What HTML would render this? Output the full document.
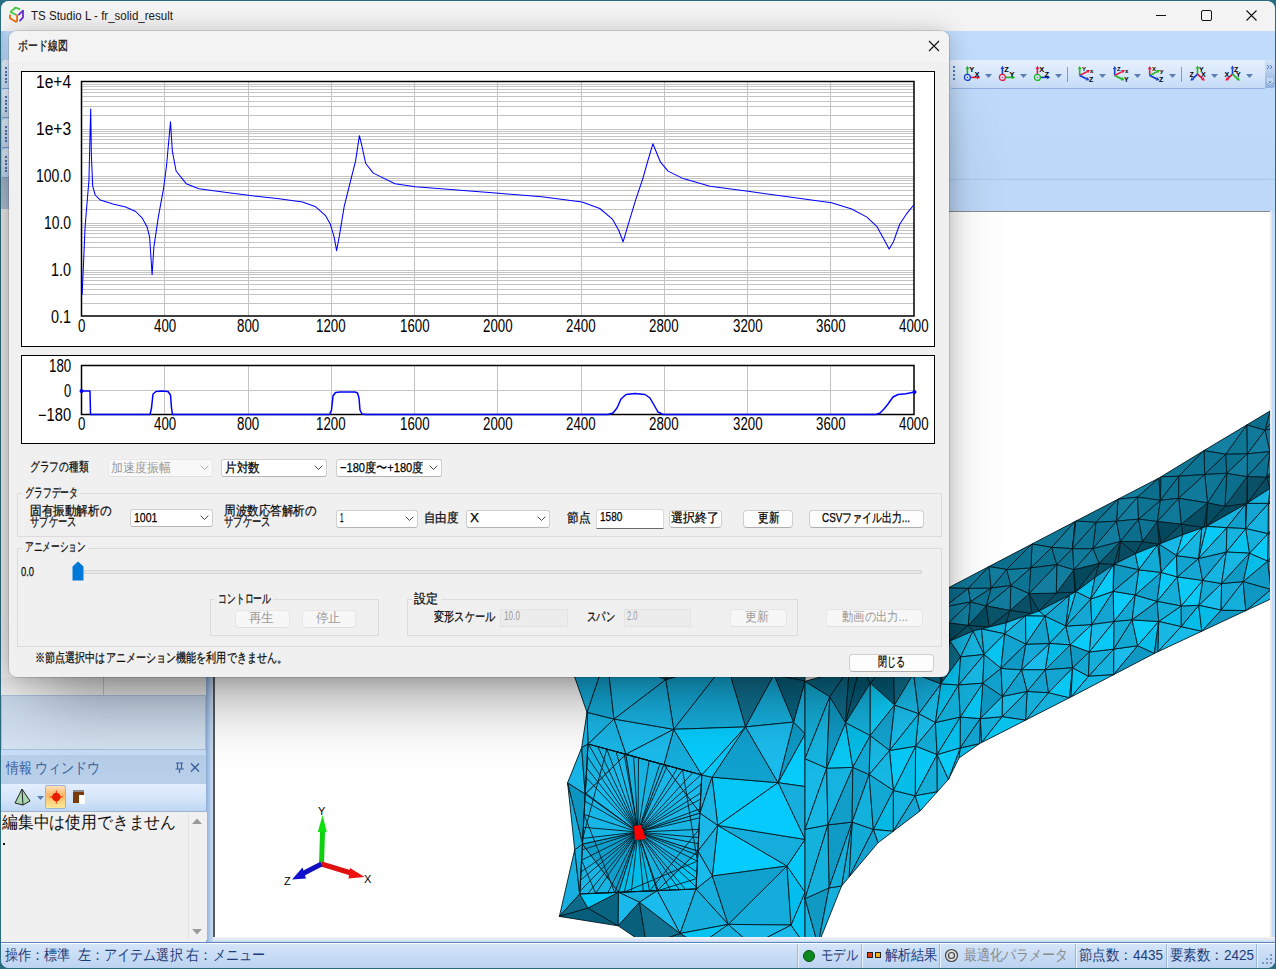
<!DOCTYPE html><html><head><meta charset="utf-8"><style>body{margin:0;width:1276px;height:969px;overflow:hidden;position:relative;font-family:'Liberation Sans', sans-serif}</style></head><body><div style="position:absolute;left:0px;top:0px;width:1276px;height:969px;background:#2b6b7f"></div><div style="position:absolute;left:1px;top:1px;width:1274px;height:967px;background:#c3dcf9;border-radius:8px;overflow:hidden"></div><div style="position:absolute;left:1px;top:1px;width:1274px;height:30px;background:#f3f3f3;border-radius:8px 8px 0 0"></div><svg style="position:absolute;left:0;top:0" width="30" height="30" viewBox="0 0 30 30">
<path d="M20.1 9.4 L15.6 7.5 L10.6 11.9 L16.4 15.1" fill="none" stroke="#3ec43e" stroke-width="1.7" stroke-linejoin="round"/>
<path d="M10 14.4 V18.3 L15.9 21.8 L17.1 20.8 V14.4" fill="none" stroke="#ec6a0c" stroke-width="1.8" stroke-linejoin="round"/>
<path d="M18.4 15.1 L23 10.6 V17.4 L19.6 21.1" fill="none" stroke="#6a2cd0" stroke-width="1.8" stroke-linejoin="round"/>
</svg><div style="position:absolute;left:31.00px;top:6.80px;line-height:17px;white-space:nowrap;font-family:'Liberation Sans', sans-serif;font-size:13px;color:#1a1a1a;transform:scaleX(0.8878);transform-origin:0 50%;">TS Studio L - fr_solid_result</div><div style="position:absolute;left:1156px;top:15px;width:10px;height:1px;background:#111"></div><div style="position:absolute;left:1201px;top:10px;width:9px;height:9px;border:1.2px solid #111;border-radius:2px"></div><svg style="position:absolute;left:1246px;top:10px" width="11" height="11"><path d="M0.5 0.5 L10.5 10.5 M10.5 0.5 L0.5 10.5" stroke="#111" stroke-width="1.1"/></svg><div style="position:absolute;left:1px;top:31px;width:1274px;height:150px;background:linear-gradient(#c0dbfb,#bcd8f9)"></div><div style="position:absolute;left:1px;top:179px;width:1274px;height:1px;background:#aac6e8"></div><div style="position:absolute;left:1px;top:180px;width:1274px;height:32px;background:#bdd8f8"></div><div style="position:absolute;left:950px;top:60px;width:316px;height:28px;background:linear-gradient(#e6f0fd,#d6e6fb 55%,#c5dbf6);border-radius:3px;border-bottom:1px solid #8fb1dd"></div><div style="position:absolute;left:1265px;top:60px;width:10px;height:28px;background:linear-gradient(#d4e4f8,#a9c4e8 60%,#8fb0de);border-radius:0 3px 3px 0"></div><svg style="position:absolute;left:1266px;top:64px" width="9" height="22"><path d="M1 1 L3 3 L1 5 M4 1 L6 3 L4 5" stroke="#5a80b8" fill="none" stroke-width="1"/><path d="M1 15 H7 M1 17 L7 17 L4 20Z" stroke="#f4f8fe" fill="#5a80b8" stroke-width="0.8"/></svg><div style="position:absolute;left:953px;top:66px;width:2px;height:2px;background:#4a78b8"></div><div style="position:absolute;left:953px;top:70px;width:2px;height:2px;background:#4a78b8"></div><div style="position:absolute;left:953px;top:74px;width:2px;height:2px;background:#4a78b8"></div><div style="position:absolute;left:953px;top:78px;width:2px;height:2px;background:#4a78b8"></div><svg style="position:absolute;left:963px;top:62px" width="20" height="22" viewBox="0 0 20 22"><path d="M4.40 12.20 L4.40 7.00" stroke="#22b422" stroke-width="1.6"/><path d="M4.40 3.80 L6.32 7.00 L2.48 7.00Z" fill="#22b422"/><path d="M7.60 15.40 L14.00 15.40" stroke="#e8163c" stroke-width="1.6"/><path d="M17.20 15.40 L14.00 17.32 L14.00 13.48Z" fill="#e8163c"/><circle cx="4.4" cy="15.4" r="3" fill="none" stroke="#1440d0" stroke-width="1.2"/><circle cx="4.4" cy="15.4" r="0.7" fill="#1440d0"/><text x="6.3" y="9.5" font-size="7.5" font-family="Liberation Sans" font-weight="bold" fill="#000">Y</text><text x="11.5" y="15" font-size="7.5" font-family="Liberation Sans" font-weight="bold" fill="#000">X</text></svg><svg style="position:absolute;left:985px;top:74px" width="7" height="4"><path d="M0 0 H7 L3.5 4Z" fill="#5a7eb0"/></svg><svg style="position:absolute;left:998px;top:62px" width="20" height="22" viewBox="0 0 20 22"><path d="M4.40 12.20 L4.40 7.00" stroke="#1440d0" stroke-width="1.6"/><path d="M4.40 3.80 L6.32 7.00 L2.48 7.00Z" fill="#1440d0"/><path d="M7.60 15.40 L14.00 15.40" stroke="#22b422" stroke-width="1.6"/><path d="M17.20 15.40 L14.00 17.32 L14.00 13.48Z" fill="#22b422"/><circle cx="4.4" cy="15.4" r="3" fill="none" stroke="#e8163c" stroke-width="1.2"/><circle cx="4.4" cy="15.4" r="0.7" fill="#e8163c"/><text x="6.3" y="9.5" font-size="7.5" font-family="Liberation Sans" font-weight="bold" fill="#000">Z</text><text x="11.5" y="15" font-size="7.5" font-family="Liberation Sans" font-weight="bold" fill="#000">Y</text></svg><svg style="position:absolute;left:1020px;top:74px" width="7" height="4"><path d="M0 0 H7 L3.5 4Z" fill="#5a7eb0"/></svg><svg style="position:absolute;left:1033px;top:62px" width="20" height="22" viewBox="0 0 20 22"><path d="M4.40 12.20 L4.40 7.00" stroke="#e8163c" stroke-width="1.6"/><path d="M4.40 3.80 L6.32 7.00 L2.48 7.00Z" fill="#e8163c"/><path d="M7.60 15.40 L14.00 15.40" stroke="#1440d0" stroke-width="1.6"/><path d="M17.20 15.40 L14.00 17.32 L14.00 13.48Z" fill="#1440d0"/><circle cx="4.4" cy="15.4" r="3" fill="none" stroke="#22b422" stroke-width="1.2"/><circle cx="4.4" cy="15.4" r="0.7" fill="#22b422"/><text x="6.3" y="9.5" font-size="7.5" font-family="Liberation Sans" font-weight="bold" fill="#000">X</text><text x="11.5" y="15" font-size="7.5" font-family="Liberation Sans" font-weight="bold" fill="#000">Z</text></svg><svg style="position:absolute;left:1055px;top:74px" width="7" height="4"><path d="M0 0 H7 L3.5 4Z" fill="#5a7eb0"/></svg><svg style="position:absolute;left:1076px;top:62px" width="20" height="22" viewBox="0 0 20 22"><path d="M3.70 13.50 L3.70 7.20" stroke="#22b422" stroke-width="1.6"/><path d="M3.70 4.00 L5.62 7.20 L1.78 7.20Z" fill="#22b422"/><path d="M3.70 13.50 L11.17 9.59" stroke="#e8163c" stroke-width="1.6"/><path d="M14.00 8.10 L12.06 11.29 L10.27 7.89Z" fill="#e8163c"/><path d="M3.70 13.50 L10.61 16.82" stroke="#1440d0" stroke-width="1.8"/><path d="M13.50 18.20 L9.78 18.55 L11.44 15.09Z" fill="#1440d0"/><text x="6" y="9" font-size="6" font-family="Liberation Sans" font-weight="bold" fill="#000">Y</text><text x="14" y="11" font-size="6" font-family="Liberation Sans" font-weight="bold" fill="#000">x</text><text x="13" y="20" font-size="7" font-family="Liberation Sans" font-weight="bold" fill="#000">Z</text></svg><svg style="position:absolute;left:1099px;top:74px" width="7" height="4"><path d="M0 0 H7 L3.5 4Z" fill="#5a7eb0"/></svg><svg style="position:absolute;left:1111px;top:62px" width="20" height="22" viewBox="0 0 20 22"><path d="M3.70 13.50 L3.70 7.20" stroke="#1440d0" stroke-width="1.6"/><path d="M3.70 4.00 L5.62 7.20 L1.78 7.20Z" fill="#1440d0"/><path d="M3.70 13.50 L11.17 9.59" stroke="#e8163c" stroke-width="1.6"/><path d="M14.00 8.10 L12.06 11.29 L10.27 7.89Z" fill="#e8163c"/><path d="M3.70 13.50 L10.61 16.82" stroke="#22b422" stroke-width="1.8"/><path d="M13.50 18.20 L9.78 18.55 L11.44 15.09Z" fill="#22b422"/><text x="6" y="9" font-size="6" font-family="Liberation Sans" font-weight="bold" fill="#000">Z</text><text x="14" y="11" font-size="6" font-family="Liberation Sans" font-weight="bold" fill="#000">x</text><text x="13" y="20" font-size="7" font-family="Liberation Sans" font-weight="bold" fill="#000">Y</text></svg><svg style="position:absolute;left:1134px;top:74px" width="7" height="4"><path d="M0 0 H7 L3.5 4Z" fill="#5a7eb0"/></svg><svg style="position:absolute;left:1146px;top:62px" width="20" height="22" viewBox="0 0 20 22"><path d="M3.70 13.50 L3.70 7.20" stroke="#e8163c" stroke-width="1.6"/><path d="M3.70 4.00 L5.62 7.20 L1.78 7.20Z" fill="#e8163c"/><path d="M3.70 13.50 L11.17 9.59" stroke="#22b422" stroke-width="1.6"/><path d="M14.00 8.10 L12.06 11.29 L10.27 7.89Z" fill="#22b422"/><path d="M3.70 13.50 L10.61 16.82" stroke="#1440d0" stroke-width="1.8"/><path d="M13.50 18.20 L9.78 18.55 L11.44 15.09Z" fill="#1440d0"/><text x="6" y="9" font-size="6" font-family="Liberation Sans" font-weight="bold" fill="#000">X</text><text x="14" y="11" font-size="6" font-family="Liberation Sans" font-weight="bold" fill="#000">y</text><text x="13" y="20" font-size="7" font-family="Liberation Sans" font-weight="bold" fill="#000">Z</text></svg><svg style="position:absolute;left:1169px;top:74px" width="7" height="4"><path d="M0 0 H7 L3.5 4Z" fill="#5a7eb0"/></svg><svg style="position:absolute;left:1189px;top:62px" width="20" height="22" viewBox="0 0 20 22"><path d="M8.50 12.10 L8.50 6.80" stroke="#22b422" stroke-width="1.6"/><path d="M8.50 3.60 L10.42 6.80 L6.58 6.80Z" fill="#22b422"/><path d="M8.50 12.10 L3.81 16.59" stroke="#1440d0" stroke-width="1.8"/><path d="M1.50 18.80 L2.48 15.20 L5.14 17.97Z" fill="#1440d0"/><path d="M8.50 12.10 L13.44 16.64" stroke="#e8163c" stroke-width="1.8"/><path d="M15.80 18.80 L12.14 18.05 L14.74 15.22Z" fill="#e8163c"/><text x="10" y="9.5" font-size="7" font-family="Liberation Sans" font-weight="bold" fill="#000">Y</text><text x="0.5" y="15" font-size="7" font-family="Liberation Sans" font-weight="bold" fill="#000">Z</text><text x="12" y="15" font-size="7" font-family="Liberation Sans" font-weight="bold" fill="#000">X</text></svg><svg style="position:absolute;left:1211px;top:74px" width="7" height="4"><path d="M0 0 H7 L3.5 4Z" fill="#5a7eb0"/></svg><svg style="position:absolute;left:1224px;top:62px" width="20" height="22" viewBox="0 0 20 22"><path d="M8.50 12.10 L8.50 6.80" stroke="#1440d0" stroke-width="1.6"/><path d="M8.50 3.60 L10.42 6.80 L6.58 6.80Z" fill="#1440d0"/><path d="M8.50 12.10 L3.81 16.59" stroke="#e8163c" stroke-width="1.8"/><path d="M1.50 18.80 L2.48 15.20 L5.14 17.97Z" fill="#e8163c"/><path d="M8.50 12.10 L13.44 16.64" stroke="#22b422" stroke-width="1.8"/><path d="M15.80 18.80 L12.14 18.05 L14.74 15.22Z" fill="#22b422"/><text x="10" y="9.5" font-size="7" font-family="Liberation Sans" font-weight="bold" fill="#000">Z</text><text x="0.5" y="15" font-size="7" font-family="Liberation Sans" font-weight="bold" fill="#000">X</text><text x="12" y="15" font-size="7" font-family="Liberation Sans" font-weight="bold" fill="#000">Y</text></svg><svg style="position:absolute;left:1246px;top:74px" width="7" height="4"><path d="M0 0 H7 L3.5 4Z" fill="#5a7eb0"/></svg><div style="position:absolute;left:1067px;top:67px;width:1px;height:15px;background:#7c9cc8"></div><div style="position:absolute;left:1181px;top:67px;width:1px;height:15px;background:#7c9cc8"></div><div style="position:absolute;left:213px;top:211px;width:1058px;height:728px;background:#fff;border-top:1px solid #8a8a8a;border-left:2px solid #5a5a5a;box-sizing:border-box"></div><div style="position:absolute;left:1270px;top:211px;width:2px;height:728px;background:#e8e8e8"></div><div style="position:absolute;left:213px;top:937px;width:1062px;height:5px;background:linear-gradient(#f4f4f4,#c9dcf4)"></div><svg style="position:absolute;left:0;top:0" width="1276" height="969"><defs><clipPath id="vp"><rect x="215" y="212" width="1055" height="725"/></clipPath></defs><g clip-path="url(#vp)"><polygon points="673.7,729.3 625.9,754.3 614.0,719.0" fill="#1bbced" stroke="#031820" stroke-width="0.9" stroke-linejoin="round"/><polygon points="582.5,844.0 618.5,892.3 579.7,894.0" fill="#18b4e4" stroke="#031820" stroke-width="0.9" stroke-linejoin="round"/><polygon points="618.5,892.3 582.5,844.0 638.0,832.0" fill="#0f9ecb" stroke="#031820" stroke-width="0.9" stroke-linejoin="round"/><polygon points="752.1,945.0 791.0,925.0 805.0,945.0" fill="#1ab9ea" stroke="#031820" stroke-width="0.9" stroke-linejoin="round"/><polygon points="699.3,945.0 728.2,924.4 752.1,945.0" fill="#16b0df" stroke="#031820" stroke-width="0.9" stroke-linejoin="round"/><polygon points="791.0,925.0 728.2,924.4 787.0,866.0" fill="#14acda" stroke="#031820" stroke-width="0.9" stroke-linejoin="round"/><polygon points="728.2,924.4 791.0,925.0 752.1,945.0" fill="#19b8e9" stroke="#031820" stroke-width="0.9" stroke-linejoin="round"/><polygon points="712.3,876.0 717.7,825.4 787.0,866.0" fill="#06cbfd" stroke="#031820" stroke-width="0.9" stroke-linejoin="round"/><polygon points="712.3,876.0 728.2,924.4 696.0,889.0" fill="#15aedd" stroke="#031820" stroke-width="0.9" stroke-linejoin="round"/><polygon points="728.2,924.4 712.3,876.0 787.0,866.0" fill="#10a1ce" stroke="#031820" stroke-width="0.9" stroke-linejoin="round"/><polygon points="585.2,794.0 625.9,754.3 638.0,832.0" fill="#1ab9ea" stroke="#031820" stroke-width="0.9" stroke-linejoin="round"/><polygon points="585.2,794.0 582.5,844.0 567.6,782.8" fill="#0b95c0" stroke="#031820" stroke-width="0.9" stroke-linejoin="round"/><polygon points="582.5,844.0 585.2,794.0 638.0,832.0" fill="#18b6e6" stroke="#031820" stroke-width="0.9" stroke-linejoin="round"/><polygon points="625.9,754.3 663.9,764.7 638.0,832.0" fill="#17b3e3" stroke="#031820" stroke-width="0.9" stroke-linejoin="round"/><polygon points="663.9,764.7 673.7,729.3 701.8,775.0" fill="#15aedd" stroke="#031820" stroke-width="0.9" stroke-linejoin="round"/><polygon points="663.9,764.7 625.9,754.3 673.7,729.3" fill="#1bbbec" stroke="#031820" stroke-width="0.9" stroke-linejoin="round"/><polygon points="574.7,849.8 579.7,894.0 559.4,916.4" fill="#16afdf" stroke="#031820" stroke-width="0.9" stroke-linejoin="round"/><polygon points="574.7,849.8 582.5,844.0 579.7,894.0" fill="#15afde" stroke="#031820" stroke-width="0.9" stroke-linejoin="round"/><polygon points="582.5,844.0 574.7,849.8 567.6,782.8" fill="#16b0df" stroke="#031820" stroke-width="0.9" stroke-linejoin="round"/><polygon points="657.2,890.7 618.5,892.3 638.0,832.0" fill="#01bbe9" stroke="#031820" stroke-width="0.9" stroke-linejoin="round"/><polygon points="791.0,925.0 805.0,892.2 805.0,945.0" fill="#04c6f6" stroke="#031820" stroke-width="0.9" stroke-linejoin="round"/><polygon points="805.0,892.2 791.0,925.0 787.0,866.0" fill="#02beee" stroke="#031820" stroke-width="0.9" stroke-linejoin="round"/><polygon points="712.3,876.0 697.9,851.0 717.7,825.4" fill="#17b2e1" stroke="#031820" stroke-width="0.9" stroke-linejoin="round"/><polygon points="697.9,851.0 712.3,876.0 696.0,889.0" fill="#1abaec" stroke="#031820" stroke-width="0.9" stroke-linejoin="round"/><polygon points="657.2,890.7 697.9,851.0 696.0,889.0" fill="#03c3f3" stroke="#031820" stroke-width="0.9" stroke-linejoin="round"/><polygon points="697.9,851.0 657.2,890.7 638.0,832.0" fill="#16b0e0" stroke="#031820" stroke-width="0.9" stroke-linejoin="round"/><polygon points="712.1,777.2 778.1,782.7 717.7,825.4" fill="#05c7f8" stroke="#031820" stroke-width="0.9" stroke-linejoin="round"/><polygon points="805.0,786.6 778.1,782.7 805.0,733.8" fill="#06ccfd" stroke="#031820" stroke-width="0.9" stroke-linejoin="round"/><polygon points="625.9,754.3 588.0,744.0 614.0,719.0" fill="#19b6e7" stroke="#031820" stroke-width="0.9" stroke-linejoin="round"/><polygon points="588.0,744.0 587.0,712.3 614.0,719.0" fill="#19b6e6" stroke="#031820" stroke-width="0.9" stroke-linejoin="round"/><polygon points="585.2,794.0 588.0,744.0 625.9,754.3" fill="#18b5e5" stroke="#031820" stroke-width="0.9" stroke-linejoin="round"/><polygon points="805.0,681.0 774.0,674.9 805.0,640.0" fill="#0b6683" stroke="#031820" stroke-width="0.9" stroke-linejoin="round"/><polygon points="774.0,674.9 747.4,640.0 805.0,640.0" fill="#0d6a89" stroke="#031820" stroke-width="0.9" stroke-linejoin="round"/><polygon points="747.4,640.0 774.0,674.9 726.5,661.9" fill="#0d6a88" stroke="#031820" stroke-width="0.9" stroke-linejoin="round"/><polygon points="632.3,640.0 606.7,654.3 574.7,640.0" fill="#18b5e5" stroke="#031820" stroke-width="0.9" stroke-linejoin="round"/><polygon points="606.7,654.3 574.7,677.0 574.7,640.0" fill="#1bbced" stroke="#031820" stroke-width="0.9" stroke-linejoin="round"/><polygon points="587.0,712.3 606.7,654.3 614.0,719.0" fill="#14abda" stroke="#031820" stroke-width="0.9" stroke-linejoin="round"/><polygon points="606.7,654.3 587.0,712.3 574.7,677.0" fill="#16b0e0" stroke="#031820" stroke-width="0.9" stroke-linejoin="round"/><polygon points="673.7,729.3 665.7,679.6 726.5,661.9" fill="#15addb" stroke="#031820" stroke-width="0.9" stroke-linejoin="round"/><polygon points="665.7,679.6 673.7,729.3 614.0,719.0" fill="#18b4e4" stroke="#031820" stroke-width="0.9" stroke-linejoin="round"/><polygon points="606.7,654.3 665.7,679.6 614.0,719.0" fill="#19b7e7" stroke="#031820" stroke-width="0.9" stroke-linejoin="round"/><polygon points="665.7,679.6 606.7,654.3 632.3,640.0" fill="#19b8e9" stroke="#031820" stroke-width="0.9" stroke-linejoin="round"/><polygon points="680.1,933.5 699.3,945.0 646.4,945.0" fill="#117191" stroke="#031820" stroke-width="0.9" stroke-linejoin="round"/><polygon points="680.1,933.5 657.2,890.7 696.0,889.0" fill="#19b7e7" stroke="#031820" stroke-width="0.9" stroke-linejoin="round"/><polygon points="728.2,924.4 680.1,933.5 696.0,889.0" fill="#15aedd" stroke="#031820" stroke-width="0.9" stroke-linejoin="round"/><polygon points="680.1,933.5 728.2,924.4 699.3,945.0" fill="#03c3f3" stroke="#031820" stroke-width="0.9" stroke-linejoin="round"/><polygon points="579.7,894.0 588.0,908.1 559.4,916.4" fill="#0d6a88" stroke="#031820" stroke-width="0.9" stroke-linejoin="round"/><polygon points="588.0,908.1 618.2,925.8 559.4,916.4" fill="#065e7a" stroke="#031820" stroke-width="0.9" stroke-linejoin="round"/><polygon points="618.5,892.3 588.0,908.1 579.7,894.0" fill="#05c7f8" stroke="#031820" stroke-width="0.9" stroke-linejoin="round"/><polygon points="618.2,925.8 588.0,908.1 618.5,892.3" fill="#096481" stroke="#031820" stroke-width="0.9" stroke-linejoin="round"/><polygon points="657.2,890.7 639.5,902.2 618.5,892.3" fill="#16b0e0" stroke="#031820" stroke-width="0.9" stroke-linejoin="round"/><polygon points="639.5,902.2 618.2,925.8 618.5,892.3" fill="#1ab9eb" stroke="#031820" stroke-width="0.9" stroke-linejoin="round"/><polygon points="618.2,925.8 639.5,902.2 646.4,945.0" fill="#075f7b" stroke="#031820" stroke-width="0.9" stroke-linejoin="round"/><polygon points="639.5,902.2 680.1,933.5 646.4,945.0" fill="#117191" stroke="#031820" stroke-width="0.9" stroke-linejoin="round"/><polygon points="680.1,933.5 639.5,902.2 657.2,890.7" fill="#1bbbed" stroke="#031820" stroke-width="0.9" stroke-linejoin="round"/><polygon points="699.9,813.0 697.9,851.0 638.0,832.0" fill="#18b4e4" stroke="#031820" stroke-width="0.9" stroke-linejoin="round"/><polygon points="697.9,851.0 699.9,813.0 717.7,825.4" fill="#1ab9ea" stroke="#031820" stroke-width="0.9" stroke-linejoin="round"/><polygon points="699.9,813.0 663.9,764.7 701.8,775.0" fill="#1bbced" stroke="#031820" stroke-width="0.9" stroke-linejoin="round"/><polygon points="663.9,764.7 699.9,813.0 638.0,832.0" fill="#19b7e7" stroke="#031820" stroke-width="0.9" stroke-linejoin="round"/><polygon points="712.1,777.2 699.9,813.0 701.8,775.0" fill="#16afdf" stroke="#031820" stroke-width="0.9" stroke-linejoin="round"/><polygon points="699.9,813.0 712.1,777.2 717.7,825.4" fill="#18b5e5" stroke="#031820" stroke-width="0.9" stroke-linejoin="round"/><polygon points="712.1,777.2 745.5,726.9 778.1,782.7" fill="#10a1ce" stroke="#031820" stroke-width="0.9" stroke-linejoin="round"/><polygon points="774.0,674.9 745.5,726.9 726.5,661.9" fill="#117291" stroke="#031820" stroke-width="0.9" stroke-linejoin="round"/><polygon points="745.5,726.9 673.7,729.3 726.5,661.9" fill="#15aedd" stroke="#031820" stroke-width="0.9" stroke-linejoin="round"/><polygon points="673.7,729.3 745.5,726.9 701.8,775.0" fill="#06cbfc" stroke="#031820" stroke-width="0.9" stroke-linejoin="round"/><polygon points="745.5,726.9 712.1,777.2 701.8,775.0" fill="#05c7f8" stroke="#031820" stroke-width="0.9" stroke-linejoin="round"/><polygon points="805.0,839.4 805.0,892.2 787.0,866.0" fill="#05c8f8" stroke="#031820" stroke-width="0.9" stroke-linejoin="round"/><polygon points="805.0,786.6 805.0,839.4 778.1,782.7" fill="#15aedd" stroke="#031820" stroke-width="0.9" stroke-linejoin="round"/><polygon points="717.7,825.4 805.0,839.4 787.0,866.0" fill="#15addb" stroke="#031820" stroke-width="0.9" stroke-linejoin="round"/><polygon points="778.1,782.7 805.0,839.4 717.7,825.4" fill="#06cafb" stroke="#031820" stroke-width="0.9" stroke-linejoin="round"/><polygon points="588.0,744.0 581.7,747.6 587.0,712.3" fill="#18b6e6" stroke="#031820" stroke-width="0.9" stroke-linejoin="round"/><polygon points="581.7,747.6 585.2,794.0 567.6,782.8" fill="#18b5e6" stroke="#031820" stroke-width="0.9" stroke-linejoin="round"/><polygon points="581.7,747.6 588.0,744.0 585.2,794.0" fill="#11a3d0" stroke="#031820" stroke-width="0.9" stroke-linejoin="round"/><polygon points="793.5,722.1 805.0,681.0 805.0,733.8" fill="#19b7e8" stroke="#031820" stroke-width="0.9" stroke-linejoin="round"/><polygon points="805.0,681.0 793.5,722.1 774.0,674.9" fill="#096380" stroke="#031820" stroke-width="0.9" stroke-linejoin="round"/><polygon points="793.5,722.1 745.5,726.9 774.0,674.9" fill="#16b1e0" stroke="#031820" stroke-width="0.9" stroke-linejoin="round"/><polygon points="778.1,782.7 793.5,722.1 805.0,733.8" fill="#0d9ac5" stroke="#031820" stroke-width="0.9" stroke-linejoin="round"/><polygon points="745.5,726.9 793.5,722.1 778.1,782.7" fill="#1bbced" stroke="#031820" stroke-width="0.9" stroke-linejoin="round"/><polygon points="665.7,679.6 689.9,640.0 726.5,661.9" fill="#0a6583" stroke="#031820" stroke-width="0.9" stroke-linejoin="round"/><polygon points="689.9,640.0 665.7,679.6 632.3,640.0" fill="#065e7a" stroke="#031820" stroke-width="0.9" stroke-linejoin="round"/><polygon points="689.9,640.0 747.4,640.0 726.5,661.9" fill="#0d6b89" stroke="#031820" stroke-width="0.9" stroke-linejoin="round"/><polygon points="1051.7,547.4 1032.0,544.0 1075.0,521.5" fill="#0f7696" stroke="#031820" stroke-width="0.9" stroke-linejoin="round"/><polygon points="903.0,611.5 878.8,628.8 860.0,634.0" fill="#0f7696" stroke="#031820" stroke-width="0.9" stroke-linejoin="round"/><polygon points="878.8,628.8 903.0,611.5 906.0,625.5" fill="#137fa1" stroke="#031820" stroke-width="0.9" stroke-linejoin="round"/><polygon points="903.0,611.5 920.7,611.3 906.0,625.5" fill="#0b6f8e" stroke="#031820" stroke-width="0.9" stroke-linejoin="round"/><polygon points="884.6,652.1 903.0,654.1 860.0,666.0" fill="#05485e" stroke="#031820" stroke-width="0.9" stroke-linejoin="round"/><polygon points="860.0,654.2 884.6,652.1 860.0,666.0" fill="#064a60" stroke="#031820" stroke-width="0.9" stroke-linejoin="round"/><polygon points="1247.0,424.8 1225.8,454.3 1204.0,450.5" fill="#1481a2" stroke="#031820" stroke-width="0.9" stroke-linejoin="round"/><polygon points="1225.8,454.3 1247.0,424.8 1247.4,453.8" fill="#0e7594" stroke="#031820" stroke-width="0.9" stroke-linejoin="round"/><polygon points="1290.0,425.9 1265.1,430.1 1290.0,399.0" fill="#0e7595" stroke="#031820" stroke-width="0.9" stroke-linejoin="round"/><polygon points="1247.0,424.8 1265.1,430.1 1247.4,453.8" fill="#107999" stroke="#031820" stroke-width="0.9" stroke-linejoin="round"/><polygon points="1265.1,430.1 1270.0,451.6 1247.4,453.8" fill="#137e9f" stroke="#031820" stroke-width="0.9" stroke-linejoin="round"/><polygon points="1270.0,451.6 1265.1,430.1 1290.0,425.9" fill="#0e7595" stroke="#031820" stroke-width="0.9" stroke-linejoin="round"/><polygon points="1118.0,499.2 1159.0,478.0 1137.5,497.1" fill="#137fa0" stroke="#031820" stroke-width="0.9" stroke-linejoin="round"/><polygon points="1116.5,521.2 1118.0,499.2 1137.5,497.1" fill="#127d9d" stroke="#031820" stroke-width="0.9" stroke-linejoin="round"/><polygon points="1159.0,478.0 1160.4,500.3 1137.5,497.1" fill="#0b6e8c" stroke="#031820" stroke-width="0.9" stroke-linejoin="round"/><polygon points="1051.7,547.4 1030.9,567.9 1032.0,544.0" fill="#117b9b" stroke="#031820" stroke-width="0.9" stroke-linejoin="round"/><polygon points="989.0,566.5 968.2,588.4 948.0,588.0" fill="#10799a" stroke="#031820" stroke-width="0.9" stroke-linejoin="round"/><polygon points="1006.5,569.5 989.0,566.5 1032.0,544.0" fill="#0b6f8e" stroke="#031820" stroke-width="0.9" stroke-linejoin="round"/><polygon points="1006.5,569.5 1030.9,567.9 1010.8,585.6" fill="#127c9d" stroke="#031820" stroke-width="0.9" stroke-linejoin="round"/><polygon points="1030.9,567.9 1006.5,569.5 1032.0,544.0" fill="#0c7190" stroke="#031820" stroke-width="0.9" stroke-linejoin="round"/><polygon points="948.7,622.8 968.3,625.3 950.0,641.0" fill="#074d63" stroke="#031820" stroke-width="0.9" stroke-linejoin="round"/><polygon points="968.3,625.3 948.7,622.8 970.4,601.9" fill="#1480a2" stroke="#031820" stroke-width="0.9" stroke-linejoin="round"/><polygon points="878.8,628.8 860.0,644.6 860.0,634.0" fill="#127c9d" stroke="#031820" stroke-width="0.9" stroke-linejoin="round"/><polygon points="946.0,589.0 920.7,611.3 903.0,611.5" fill="#0b6e8c" stroke="#031820" stroke-width="0.9" stroke-linejoin="round"/><polygon points="877.7,644.6 884.6,652.1 860.0,654.2" fill="#0b6e8d" stroke="#031820" stroke-width="0.9" stroke-linejoin="round"/><polygon points="860.0,644.6 877.7,644.6 860.0,654.2" fill="#0d7291" stroke="#031820" stroke-width="0.9" stroke-linejoin="round"/><polygon points="877.7,644.6 878.8,628.8 906.0,625.5" fill="#0d7393" stroke="#031820" stroke-width="0.9" stroke-linejoin="round"/><polygon points="877.7,644.6 860.0,644.6 878.8,628.8" fill="#1480a1" stroke="#031820" stroke-width="0.9" stroke-linejoin="round"/><polygon points="1290.0,450.1 1270.0,451.6 1290.0,425.9" fill="#107999" stroke="#031820" stroke-width="0.9" stroke-linejoin="round"/><polygon points="1265.1,430.1 1270.0,411.0 1290.0,399.0" fill="#0f7696" stroke="#031820" stroke-width="0.9" stroke-linejoin="round"/><polygon points="1270.0,411.0 1265.1,430.1 1247.0,424.8" fill="#0b6e8d" stroke="#031820" stroke-width="0.9" stroke-linejoin="round"/><polygon points="1120.4,541.5 1135.3,553.7 1118.0,562.4" fill="#074c62" stroke="#031820" stroke-width="0.9" stroke-linejoin="round"/><polygon points="1010.0,610.5 1029.1,593.7 1032.0,613.5" fill="#095067" stroke="#031820" stroke-width="0.9" stroke-linejoin="round"/><polygon points="1030.9,567.9 1029.1,593.7 1010.8,585.6" fill="#0d7392" stroke="#031820" stroke-width="0.9" stroke-linejoin="round"/><polygon points="1029.1,593.7 1010.0,610.5 1010.8,585.6" fill="#117a9a" stroke="#031820" stroke-width="0.9" stroke-linejoin="round"/><polygon points="922.6,641.8 946.0,642.1 903.0,654.1" fill="#095167" stroke="#031820" stroke-width="0.9" stroke-linejoin="round"/><polygon points="946.0,642.1 948.7,622.8 950.0,641.0" fill="#04485e" stroke="#031820" stroke-width="0.9" stroke-linejoin="round"/><polygon points="946.0,642.1 922.6,641.8 948.7,622.8" fill="#05495e" stroke="#031820" stroke-width="0.9" stroke-linejoin="round"/><polygon points="922.6,641.8 923.8,625.5 948.7,622.8" fill="#117a9b" stroke="#031820" stroke-width="0.9" stroke-linejoin="round"/><polygon points="920.7,611.3 923.8,625.5 906.0,625.5" fill="#1480a1" stroke="#031820" stroke-width="0.9" stroke-linejoin="round"/><polygon points="991.1,588.0 1006.5,569.5 1010.8,585.6" fill="#0c7190" stroke="#031820" stroke-width="0.9" stroke-linejoin="round"/><polygon points="968.2,588.4 991.1,588.0 970.4,601.9" fill="#127d9e" stroke="#031820" stroke-width="0.9" stroke-linejoin="round"/><polygon points="991.1,588.0 968.2,588.4 989.0,566.5" fill="#0d7291" stroke="#031820" stroke-width="0.9" stroke-linejoin="round"/><polygon points="1006.5,569.5 991.1,588.0 989.0,566.5" fill="#127d9e" stroke="#031820" stroke-width="0.9" stroke-linejoin="round"/><polygon points="1006.0,622.8 1010.0,610.5 1032.0,613.5" fill="#084f65" stroke="#031820" stroke-width="0.9" stroke-linejoin="round"/><polygon points="1010.0,610.5 1006.0,622.8 989.0,627.0" fill="#064b61" stroke="#031820" stroke-width="0.9" stroke-linejoin="round"/><polygon points="968.3,625.3 973.0,631.0 950.0,641.0" fill="#0a5268" stroke="#031820" stroke-width="0.9" stroke-linejoin="round"/><polygon points="973.0,631.0 968.3,625.3 989.0,627.0" fill="#084e64" stroke="#031820" stroke-width="0.9" stroke-linejoin="round"/><polygon points="944.9,606.7 946.0,589.0 948.0,588.0" fill="#137e9f" stroke="#031820" stroke-width="0.9" stroke-linejoin="round"/><polygon points="968.2,588.4 944.9,606.7 948.0,588.0" fill="#0b6e8d" stroke="#031820" stroke-width="0.9" stroke-linejoin="round"/><polygon points="946.0,589.0 944.9,606.7 920.7,611.3" fill="#107999" stroke="#031820" stroke-width="0.9" stroke-linejoin="round"/><polygon points="944.9,606.7 923.8,625.5 920.7,611.3" fill="#137fa0" stroke="#031820" stroke-width="0.9" stroke-linejoin="round"/><polygon points="923.8,625.5 944.9,606.7 948.7,622.8" fill="#0d7292" stroke="#031820" stroke-width="0.9" stroke-linejoin="round"/><polygon points="948.7,622.8 944.9,606.7 970.4,601.9" fill="#117b9b" stroke="#031820" stroke-width="0.9" stroke-linejoin="round"/><polygon points="944.9,606.7 968.2,588.4 970.4,601.9" fill="#137e9f" stroke="#031820" stroke-width="0.9" stroke-linejoin="round"/><polygon points="1266.6,477.3 1290.0,450.1 1290.0,476.0" fill="#064a60" stroke="#031820" stroke-width="0.9" stroke-linejoin="round"/><polygon points="1290.0,450.1 1266.6,477.3 1270.0,451.6" fill="#1480a1" stroke="#031820" stroke-width="0.9" stroke-linejoin="round"/><polygon points="1120.4,541.5 1092.9,548.6 1116.5,521.2" fill="#127d9e" stroke="#031820" stroke-width="0.9" stroke-linejoin="round"/><polygon points="1095.9,522.3 1076.0,521.0 1118.0,499.2" fill="#0c7190" stroke="#031820" stroke-width="0.9" stroke-linejoin="round"/><polygon points="1095.9,522.3 1118.0,499.2 1116.5,521.2" fill="#0f7797" stroke="#031820" stroke-width="0.9" stroke-linejoin="round"/><polygon points="1092.9,548.6 1095.9,522.3 1116.5,521.2" fill="#0c7191" stroke="#031820" stroke-width="0.9" stroke-linejoin="round"/><polygon points="1178.9,476.2 1161.0,476.8 1204.0,450.5" fill="#0f7696" stroke="#031820" stroke-width="0.9" stroke-linejoin="round"/><polygon points="1161.0,476.8 1160.4,500.3 1159.0,478.0" fill="#0c708f" stroke="#031820" stroke-width="0.9" stroke-linejoin="round"/><polygon points="1161.0,476.8 1178.9,476.2 1160.4,500.3" fill="#0e7493" stroke="#031820" stroke-width="0.9" stroke-linejoin="round"/><polygon points="1225.8,454.3 1204.7,474.5 1204.0,450.5" fill="#0d7291" stroke="#031820" stroke-width="0.9" stroke-linejoin="round"/><polygon points="1204.7,474.5 1178.9,476.2 1204.0,450.5" fill="#0d7393" stroke="#031820" stroke-width="0.9" stroke-linejoin="round"/><polygon points="1157.4,521.5 1138.6,519.1 1160.4,500.3" fill="#0d7393" stroke="#031820" stroke-width="0.9" stroke-linejoin="round"/><polygon points="1138.6,519.1 1116.5,521.2 1137.5,497.1" fill="#127d9e" stroke="#031820" stroke-width="0.9" stroke-linejoin="round"/><polygon points="1160.4,500.3 1138.6,519.1 1137.5,497.1" fill="#0d7392" stroke="#031820" stroke-width="0.9" stroke-linejoin="round"/><polygon points="1138.6,519.1 1120.4,541.5 1116.5,521.2" fill="#0d7291" stroke="#031820" stroke-width="0.9" stroke-linejoin="round"/><polygon points="1075.0,592.2 1056.3,593.1 1073.8,569.8" fill="#074d63" stroke="#031820" stroke-width="0.9" stroke-linejoin="round"/><polygon points="905.2,639.6 923.8,625.5 922.6,641.8" fill="#0f7797" stroke="#031820" stroke-width="0.9" stroke-linejoin="round"/><polygon points="884.6,652.1 905.2,639.6 903.0,654.1" fill="#0a5269" stroke="#031820" stroke-width="0.9" stroke-linejoin="round"/><polygon points="905.2,639.6 922.6,641.8 903.0,654.1" fill="#0a5369" stroke="#031820" stroke-width="0.9" stroke-linejoin="round"/><polygon points="923.8,625.5 905.2,639.6 906.0,625.5" fill="#107898" stroke="#031820" stroke-width="0.9" stroke-linejoin="round"/><polygon points="905.2,639.6 877.7,644.6 906.0,625.5" fill="#117a9a" stroke="#031820" stroke-width="0.9" stroke-linejoin="round"/><polygon points="877.7,644.6 905.2,639.6 884.6,652.1" fill="#0d7291" stroke="#031820" stroke-width="0.9" stroke-linejoin="round"/><polygon points="1010.0,610.5 986.2,605.9 1010.8,585.6" fill="#127c9d" stroke="#031820" stroke-width="0.9" stroke-linejoin="round"/><polygon points="986.2,605.9 991.1,588.0 1010.8,585.6" fill="#0f7696" stroke="#031820" stroke-width="0.9" stroke-linejoin="round"/><polygon points="986.2,605.9 1010.0,610.5 989.0,627.0" fill="#0b546a" stroke="#031820" stroke-width="0.9" stroke-linejoin="round"/><polygon points="968.3,625.3 986.2,605.9 989.0,627.0" fill="#054a5f" stroke="#031820" stroke-width="0.9" stroke-linejoin="round"/><polygon points="986.2,605.9 968.3,625.3 970.4,601.9" fill="#0d7291" stroke="#031820" stroke-width="0.9" stroke-linejoin="round"/><polygon points="991.1,588.0 986.2,605.9 970.4,601.9" fill="#0c7291" stroke="#031820" stroke-width="0.9" stroke-linejoin="round"/><polygon points="1270.0,488.5 1266.6,477.3 1290.0,476.0" fill="#084e65" stroke="#031820" stroke-width="0.9" stroke-linejoin="round"/><polygon points="1266.6,477.3 1270.0,488.5 1247.0,503.3" fill="#074c62" stroke="#031820" stroke-width="0.9" stroke-linejoin="round"/><polygon points="1270.0,451.6 1247.2,476.5 1247.4,453.8" fill="#0f7696" stroke="#031820" stroke-width="0.9" stroke-linejoin="round"/><polygon points="1266.6,477.3 1247.2,476.5 1270.0,451.6" fill="#0d7291" stroke="#031820" stroke-width="0.9" stroke-linejoin="round"/><polygon points="1247.2,476.5 1266.6,477.3 1247.0,503.3" fill="#0a5168" stroke="#031820" stroke-width="0.9" stroke-linejoin="round"/><polygon points="1099.0,563.5 1092.9,548.6 1120.4,541.5" fill="#0c708f" stroke="#031820" stroke-width="0.9" stroke-linejoin="round"/><polygon points="1092.9,548.6 1099.0,563.5 1073.8,569.8" fill="#117a9b" stroke="#031820" stroke-width="0.9" stroke-linejoin="round"/><polygon points="1072.5,548.7 1092.9,548.6 1073.8,569.8" fill="#117a9a" stroke="#031820" stroke-width="0.9" stroke-linejoin="round"/><polygon points="1072.5,548.7 1095.9,522.3 1092.9,548.6" fill="#0e7494" stroke="#031820" stroke-width="0.9" stroke-linejoin="round"/><polygon points="1072.5,548.7 1051.7,547.4 1075.0,521.5" fill="#117b9b" stroke="#031820" stroke-width="0.9" stroke-linejoin="round"/><polygon points="1076.0,521.0 1072.5,548.7 1075.0,521.5" fill="#0e7494" stroke="#031820" stroke-width="0.9" stroke-linejoin="round"/><polygon points="1095.9,522.3 1072.5,548.7 1076.0,521.0" fill="#0e7595" stroke="#031820" stroke-width="0.9" stroke-linejoin="round"/><polygon points="1178.9,476.2 1178.7,498.3 1160.4,500.3" fill="#0d7292" stroke="#031820" stroke-width="0.9" stroke-linejoin="round"/><polygon points="1204.7,474.5 1178.7,498.3 1178.9,476.2" fill="#0c708f" stroke="#031820" stroke-width="0.9" stroke-linejoin="round"/><polygon points="1178.7,498.3 1157.4,521.5 1160.4,500.3" fill="#0d7392" stroke="#031820" stroke-width="0.9" stroke-linejoin="round"/><polygon points="1120.4,541.5 1142.6,541.6 1135.3,553.7" fill="#074d63" stroke="#031820" stroke-width="0.9" stroke-linejoin="round"/><polygon points="1138.6,519.1 1142.6,541.6 1120.4,541.5" fill="#0b6e8d" stroke="#031820" stroke-width="0.9" stroke-linejoin="round"/><polygon points="1142.6,541.6 1138.6,519.1 1157.4,521.5" fill="#0e7494" stroke="#031820" stroke-width="0.9" stroke-linejoin="round"/><polygon points="1039.0,611.0 1056.3,593.1 1075.0,592.2" fill="#084f65" stroke="#031820" stroke-width="0.9" stroke-linejoin="round"/><polygon points="1029.1,593.7 1039.0,611.0 1032.0,613.5" fill="#04475d" stroke="#031820" stroke-width="0.9" stroke-linejoin="round"/><polygon points="1056.3,593.1 1039.0,611.0 1029.1,593.7" fill="#084e64" stroke="#031820" stroke-width="0.9" stroke-linejoin="round"/><polygon points="1246.8,503.4 1206.5,526.4 1224.9,506.4" fill="#04485d" stroke="#031820" stroke-width="0.9" stroke-linejoin="round"/><polygon points="1246.8,503.4 1247.2,476.5 1247.0,503.3" fill="#095066" stroke="#031820" stroke-width="0.9" stroke-linejoin="round"/><polygon points="1247.2,476.5 1246.8,503.4 1224.9,506.4" fill="#0a5168" stroke="#031820" stroke-width="0.9" stroke-linejoin="round"/><polygon points="1226.8,473.3 1247.2,476.5 1224.9,506.4" fill="#0b6e8d" stroke="#031820" stroke-width="0.9" stroke-linejoin="round"/><polygon points="1226.8,473.3 1204.7,474.5 1225.8,454.3" fill="#0b6e8c" stroke="#031820" stroke-width="0.9" stroke-linejoin="round"/><polygon points="1226.8,473.3 1225.8,454.3 1247.4,453.8" fill="#0b6f8e" stroke="#031820" stroke-width="0.9" stroke-linejoin="round"/><polygon points="1247.2,476.5 1226.8,473.3 1247.4,453.8" fill="#127d9e" stroke="#031820" stroke-width="0.9" stroke-linejoin="round"/><polygon points="1056.8,564.7 1030.9,567.9 1051.7,547.4" fill="#0c708f" stroke="#031820" stroke-width="0.9" stroke-linejoin="round"/><polygon points="1072.5,548.7 1056.8,564.7 1051.7,547.4" fill="#0e7594" stroke="#031820" stroke-width="0.9" stroke-linejoin="round"/><polygon points="1056.8,564.7 1029.1,593.7 1030.9,567.9" fill="#0b6f8d" stroke="#031820" stroke-width="0.9" stroke-linejoin="round"/><polygon points="1056.8,564.7 1072.5,548.7 1073.8,569.8" fill="#0e7493" stroke="#031820" stroke-width="0.9" stroke-linejoin="round"/><polygon points="1056.3,593.1 1056.8,564.7 1073.8,569.8" fill="#127d9e" stroke="#031820" stroke-width="0.9" stroke-linejoin="round"/><polygon points="1056.8,564.7 1056.3,593.1 1029.1,593.7" fill="#137e9f" stroke="#031820" stroke-width="0.9" stroke-linejoin="round"/><polygon points="1142.6,541.6 1159.0,544.2 1135.3,553.7" fill="#05495f" stroke="#031820" stroke-width="0.9" stroke-linejoin="round"/><polygon points="1161.0,543.4 1159.0,544.2 1157.4,521.5" fill="#094f66" stroke="#031820" stroke-width="0.9" stroke-linejoin="round"/><polygon points="1159.0,544.2 1142.6,541.6 1157.4,521.5" fill="#095066" stroke="#031820" stroke-width="0.9" stroke-linejoin="round"/><polygon points="1207.5,502.9 1226.8,473.3 1224.9,506.4" fill="#0b708e" stroke="#031820" stroke-width="0.9" stroke-linejoin="round"/><polygon points="1226.8,473.3 1207.5,502.9 1204.7,474.5" fill="#0f7696" stroke="#031820" stroke-width="0.9" stroke-linejoin="round"/><polygon points="1207.5,502.9 1206.5,526.4 1204.0,527.3" fill="#074c62" stroke="#031820" stroke-width="0.9" stroke-linejoin="round"/><polygon points="1206.5,526.4 1207.5,502.9 1224.9,506.4" fill="#064c62" stroke="#031820" stroke-width="0.9" stroke-linejoin="round"/><polygon points="1207.5,502.9 1178.7,498.3 1204.7,474.5" fill="#117a9a" stroke="#031820" stroke-width="0.9" stroke-linejoin="round"/><polygon points="1114.0,564.4 1095.0,577.4 1099.0,563.5" fill="#095167" stroke="#031820" stroke-width="0.9" stroke-linejoin="round"/><polygon points="1114.0,564.4 1120.4,541.5 1118.0,562.4" fill="#084f65" stroke="#031820" stroke-width="0.9" stroke-linejoin="round"/><polygon points="1114.0,564.4 1099.0,563.5 1120.4,541.5" fill="#095167" stroke="#031820" stroke-width="0.9" stroke-linejoin="round"/><polygon points="1095.0,577.4 1076.0,591.7 1099.0,563.5" fill="#0b546b" stroke="#031820" stroke-width="0.9" stroke-linejoin="round"/><polygon points="1076.0,591.7 1075.0,592.2 1073.8,569.8" fill="#04475c" stroke="#031820" stroke-width="0.9" stroke-linejoin="round"/><polygon points="1099.0,563.5 1076.0,591.7 1073.8,569.8" fill="#04485e" stroke="#031820" stroke-width="0.9" stroke-linejoin="round"/><polygon points="1182.8,534.7 1181.2,524.2 1204.0,527.3" fill="#054a5f" stroke="#031820" stroke-width="0.9" stroke-linejoin="round"/><polygon points="1181.2,524.2 1207.5,502.9 1204.0,527.3" fill="#074d63" stroke="#031820" stroke-width="0.9" stroke-linejoin="round"/><polygon points="1207.5,502.9 1181.2,524.2 1178.7,498.3" fill="#0b6e8d" stroke="#031820" stroke-width="0.9" stroke-linejoin="round"/><polygon points="1178.7,498.3 1181.2,524.2 1157.4,521.5" fill="#107899" stroke="#031820" stroke-width="0.9" stroke-linejoin="round"/><polygon points="1181.2,524.2 1182.8,534.7 1161.0,543.4" fill="#095167" stroke="#031820" stroke-width="0.9" stroke-linejoin="round"/><polygon points="1181.2,524.2 1161.0,543.4 1157.4,521.5" fill="#04485e" stroke="#031820" stroke-width="0.9" stroke-linejoin="round"/><polygon points="805.0,965.9 805.0,898.7 818.0,945.0" fill="#16b5e1" stroke="#031820" stroke-width="0.9" stroke-linejoin="round"/><polygon points="1065.9,626.1 1070.2,644.9 1049.4,643.5" fill="#13add8" stroke="#031820" stroke-width="0.9" stroke-linejoin="round"/><polygon points="1070.2,644.9 1045.2,669.8 1049.4,643.5" fill="#05bce7" stroke="#031820" stroke-width="0.9" stroke-linejoin="round"/><polygon points="827.9,824.9 805.0,898.7 805.0,829.3" fill="#14b1dd" stroke="#031820" stroke-width="0.9" stroke-linejoin="round"/><polygon points="829.8,696.7 805.0,758.7 805.0,681.3" fill="#14afda" stroke="#031820" stroke-width="0.9" stroke-linejoin="round"/><polygon points="849.1,669.0 829.8,696.7 805.0,681.3" fill="#0d6b89" stroke="#031820" stroke-width="0.9" stroke-linejoin="round"/><polygon points="893.2,656.8 870.3,683.1 860.0,666.0" fill="#0b6684" stroke="#031820" stroke-width="0.9" stroke-linejoin="round"/><polygon points="870.3,683.1 893.2,656.8 894.5,705.1" fill="#065d79" stroke="#031820" stroke-width="0.9" stroke-linejoin="round"/><polygon points="950.0,641.0 940.9,683.8 937.3,644.5" fill="#075e7b" stroke="#031820" stroke-width="0.9" stroke-linejoin="round"/><polygon points="940.9,683.8 935.4,722.5 918.7,713.8" fill="#18bae7" stroke="#031820" stroke-width="0.9" stroke-linejoin="round"/><polygon points="935.4,722.5 915.6,746.2 918.7,713.8" fill="#19bdea" stroke="#031820" stroke-width="0.9" stroke-linejoin="round"/><polygon points="915.6,746.2 935.4,722.5 937.1,754.7" fill="#12acd6" stroke="#031820" stroke-width="0.9" stroke-linejoin="round"/><polygon points="913.6,673.3 893.2,656.8 937.3,644.5" fill="#075e7b" stroke="#031820" stroke-width="0.9" stroke-linejoin="round"/><polygon points="893.2,656.8 913.6,673.3 894.5,705.1" fill="#10708f" stroke="#031820" stroke-width="0.9" stroke-linejoin="round"/><polygon points="894.5,705.1 913.6,673.3 918.7,713.8" fill="#17b7e4" stroke="#031820" stroke-width="0.9" stroke-linejoin="round"/><polygon points="913.6,673.3 940.9,683.8 918.7,713.8" fill="#15a8d5" stroke="#031820" stroke-width="0.9" stroke-linejoin="round"/><polygon points="940.9,683.8 913.6,673.3 937.3,644.5" fill="#0a6582" stroke="#031820" stroke-width="0.9" stroke-linejoin="round"/><polygon points="982.8,683.2 1002.4,696.4 980.3,718.6" fill="#0d96c0" stroke="#031820" stroke-width="0.9" stroke-linejoin="round"/><polygon points="960.6,656.9 950.0,641.0 973.0,631.0" fill="#14b0dc" stroke="#031820" stroke-width="0.9" stroke-linejoin="round"/><polygon points="950.0,641.0 960.6,656.9 940.9,683.8" fill="#0e6c8a" stroke="#031820" stroke-width="0.9" stroke-linejoin="round"/><polygon points="958.6,685.0 935.4,722.5 940.9,683.8" fill="#05bee9" stroke="#031820" stroke-width="0.9" stroke-linejoin="round"/><polygon points="960.6,656.9 958.6,685.0 940.9,683.8" fill="#07c3ef" stroke="#031820" stroke-width="0.9" stroke-linejoin="round"/><polygon points="1025.5,720.2 1048.5,692.7 1069.5,697.7" fill="#14b0db" stroke="#031820" stroke-width="0.9" stroke-linejoin="round"/><polygon points="1048.5,692.7 1025.5,720.2 1027.1,691.4" fill="#13aed9" stroke="#031820" stroke-width="0.9" stroke-linejoin="round"/><polygon points="1045.2,669.8 1048.5,692.7 1027.1,691.4" fill="#13a2cf" stroke="#031820" stroke-width="0.9" stroke-linejoin="round"/><polygon points="915.2,795.8 915.6,746.2 937.1,754.7" fill="#09c7f4" stroke="#031820" stroke-width="0.9" stroke-linejoin="round"/><polygon points="937.3,791.8 915.2,795.8 937.1,754.7" fill="#13add8" stroke="#031820" stroke-width="0.9" stroke-linejoin="round"/><polygon points="893.3,790.4 915.2,795.8 893.2,831.3" fill="#15b3df" stroke="#031820" stroke-width="0.9" stroke-linejoin="round"/><polygon points="915.2,795.8 893.3,790.4 915.6,746.2" fill="#05bde8" stroke="#031820" stroke-width="0.9" stroke-linejoin="round"/><polygon points="1065.9,626.1 1044.9,616.2 1069.5,595.1" fill="#13a4d0" stroke="#031820" stroke-width="0.9" stroke-linejoin="round"/><polygon points="1044.9,616.2 1065.9,626.1 1049.4,643.5" fill="#04b9e3" stroke="#031820" stroke-width="0.9" stroke-linejoin="round"/><polygon points="1132.1,619.9 1113.8,621.6 1135.2,595.0" fill="#11a9d3" stroke="#031820" stroke-width="0.9" stroke-linejoin="round"/><polygon points="1113.6,674.7 1113.7,649.1 1137.7,645.7" fill="#1abdeb" stroke="#031820" stroke-width="0.9" stroke-linejoin="round"/><polygon points="1113.7,649.1 1132.1,619.9 1137.7,645.7" fill="#11a9d3" stroke="#031820" stroke-width="0.9" stroke-linejoin="round"/><polygon points="1132.1,619.9 1113.7,649.1 1113.8,621.6" fill="#13acd7" stroke="#031820" stroke-width="0.9" stroke-linejoin="round"/><polygon points="1113.8,621.6 1113.1,591.3 1135.2,595.0" fill="#0acbf9" stroke="#031820" stroke-width="0.9" stroke-linejoin="round"/><polygon points="829.0,887.9 827.9,824.9 852.1,822.1" fill="#109bc6" stroke="#031820" stroke-width="0.9" stroke-linejoin="round"/><polygon points="805.0,898.7 829.0,887.9 818.0,945.0" fill="#0f99c3" stroke="#031820" stroke-width="0.9" stroke-linejoin="round"/><polygon points="827.9,824.9 829.0,887.9 805.0,898.7" fill="#14b1dc" stroke="#031820" stroke-width="0.9" stroke-linejoin="round"/><polygon points="873.3,829.4 849.1,877.0 852.1,822.1" fill="#12abd5" stroke="#031820" stroke-width="0.9" stroke-linejoin="round"/><polygon points="873.3,829.4 893.3,790.4 893.2,831.3" fill="#04b9e3" stroke="#031820" stroke-width="0.9" stroke-linejoin="round"/><polygon points="805.0,758.7 826.7,768.1 805.0,829.3" fill="#18b9e6" stroke="#031820" stroke-width="0.9" stroke-linejoin="round"/><polygon points="826.7,768.1 827.9,824.9 805.0,829.3" fill="#17b7e4" stroke="#031820" stroke-width="0.9" stroke-linejoin="round"/><polygon points="826.7,768.1 805.0,758.7 829.8,696.7" fill="#16b5e1" stroke="#031820" stroke-width="0.9" stroke-linejoin="round"/><polygon points="1025.5,720.2 1002.0,716.7 1027.1,691.4" fill="#14a5d2" stroke="#031820" stroke-width="0.9" stroke-linejoin="round"/><polygon points="1002.0,716.7 1002.4,696.4 1027.1,691.4" fill="#17b8e4" stroke="#031820" stroke-width="0.9" stroke-linejoin="round"/><polygon points="1002.0,716.7 1025.5,720.2 981.4,742.7" fill="#07c2ed" stroke="#031820" stroke-width="0.9" stroke-linejoin="round"/><polygon points="1002.0,716.7 981.4,742.7 980.3,718.6" fill="#12acd7" stroke="#031820" stroke-width="0.9" stroke-linejoin="round"/><polygon points="1002.4,696.4 1002.0,716.7 980.3,718.6" fill="#19bbe8" stroke="#031820" stroke-width="0.9" stroke-linejoin="round"/><polygon points="1004.7,633.8 1006.0,622.8 1025.5,615.8" fill="#1abeeb" stroke="#031820" stroke-width="0.9" stroke-linejoin="round"/><polygon points="984.1,654.5 960.6,656.9 973.0,631.0" fill="#16b5e1" stroke="#031820" stroke-width="0.9" stroke-linejoin="round"/><polygon points="958.6,685.0 984.1,654.5 982.8,683.2" fill="#17b8e4" stroke="#031820" stroke-width="0.9" stroke-linejoin="round"/><polygon points="984.1,654.5 958.6,685.0 960.6,656.9" fill="#13add7" stroke="#031820" stroke-width="0.9" stroke-linejoin="round"/><polygon points="1045.2,669.8 1021.5,669.8 1049.4,643.5" fill="#19bcea" stroke="#031820" stroke-width="0.9" stroke-linejoin="round"/><polygon points="1021.5,669.8 1045.2,669.8 1027.1,691.4" fill="#14afdb" stroke="#031820" stroke-width="0.9" stroke-linejoin="round"/><polygon points="1002.4,696.4 1021.5,669.8 1027.1,691.4" fill="#12a0cc" stroke="#031820" stroke-width="0.9" stroke-linejoin="round"/><polygon points="935.4,722.5 960.3,717.0 937.1,754.7" fill="#04b9e4" stroke="#031820" stroke-width="0.9" stroke-linejoin="round"/><polygon points="958.6,685.0 960.3,717.0 935.4,722.5" fill="#13aed9" stroke="#031820" stroke-width="0.9" stroke-linejoin="round"/><polygon points="960.1,748.0 960.3,717.0 980.3,718.6" fill="#12aad5" stroke="#031820" stroke-width="0.9" stroke-linejoin="round"/><polygon points="960.3,717.0 960.1,748.0 937.1,754.7" fill="#06bfeb" stroke="#031820" stroke-width="0.9" stroke-linejoin="round"/><polygon points="960.3,717.0 982.8,683.2 980.3,718.6" fill="#08c4f0" stroke="#031820" stroke-width="0.9" stroke-linejoin="round"/><polygon points="960.3,717.0 958.6,685.0 982.8,683.2" fill="#13add8" stroke="#031820" stroke-width="0.9" stroke-linejoin="round"/><polygon points="915.2,795.8 920.0,811.0 893.2,831.3" fill="#15a6d4" stroke="#031820" stroke-width="0.9" stroke-linejoin="round"/><polygon points="920.0,811.0 915.2,795.8 937.3,791.8" fill="#08c4f0" stroke="#031820" stroke-width="0.9" stroke-linejoin="round"/><polygon points="893.3,790.4 889.5,750.5 915.6,746.2" fill="#09c9f6" stroke="#031820" stroke-width="0.9" stroke-linejoin="round"/><polygon points="889.5,750.5 894.5,705.1 918.7,713.8" fill="#1abdeb" stroke="#031820" stroke-width="0.9" stroke-linejoin="round"/><polygon points="915.6,746.2 889.5,750.5 918.7,713.8" fill="#05bbe6" stroke="#031820" stroke-width="0.9" stroke-linejoin="round"/><polygon points="1044.9,616.2 1039.0,611.0 1069.5,595.1" fill="#12acd6" stroke="#031820" stroke-width="0.9" stroke-linejoin="round"/><polygon points="1039.0,611.0 1044.9,616.2 1025.5,615.8" fill="#08c4f0" stroke="#031820" stroke-width="0.9" stroke-linejoin="round"/><polygon points="1132.1,619.9 1158.7,621.5 1137.7,645.7" fill="#0accf9" stroke="#031820" stroke-width="0.9" stroke-linejoin="round"/><polygon points="1088.4,676.3 1113.7,649.1 1113.6,674.7" fill="#15b1dd" stroke="#031820" stroke-width="0.9" stroke-linejoin="round"/><polygon points="1290.0,562.6 1267.6,561.2 1290.0,533.8" fill="#14b1dc" stroke="#031820" stroke-width="0.9" stroke-linejoin="round"/><polygon points="1157.7,651.8 1181.1,626.6 1201.8,631.2" fill="#18bae7" stroke="#031820" stroke-width="0.9" stroke-linejoin="round"/><polygon points="1181.1,626.6 1198.8,605.3 1201.8,631.2" fill="#05bde8" stroke="#031820" stroke-width="0.9" stroke-linejoin="round"/><polygon points="1198.8,605.3 1181.1,626.6 1181.1,606.0" fill="#14a6d3" stroke="#031820" stroke-width="0.9" stroke-linejoin="round"/><polygon points="1181.1,626.6 1158.7,621.5 1181.1,606.0" fill="#05bde8" stroke="#031820" stroke-width="0.9" stroke-linejoin="round"/><polygon points="1158.7,621.5 1181.1,626.6 1157.7,651.8" fill="#18b8e5" stroke="#031820" stroke-width="0.9" stroke-linejoin="round"/><polygon points="1154.4,653.4 1113.6,674.7 1137.7,645.7" fill="#0e98c3" stroke="#031820" stroke-width="0.9" stroke-linejoin="round"/><polygon points="1158.7,621.5 1154.4,653.4 1137.7,645.7" fill="#06bee9" stroke="#031820" stroke-width="0.9" stroke-linejoin="round"/><polygon points="1154.4,653.4 1158.7,621.5 1157.7,651.8" fill="#0e97c2" stroke="#031820" stroke-width="0.9" stroke-linejoin="round"/><polygon points="1091.8,624.5 1113.1,591.3 1113.8,621.6" fill="#14a4d1" stroke="#031820" stroke-width="0.9" stroke-linejoin="round"/><polygon points="1065.9,626.1 1091.8,624.5 1070.2,644.9" fill="#15b3df" stroke="#031820" stroke-width="0.9" stroke-linejoin="round"/><polygon points="1206.5,526.4 1245.9,503.9 1226.9,527.7" fill="#15b3df" stroke="#031820" stroke-width="0.9" stroke-linejoin="round"/><polygon points="1198.5,558.5 1206.5,526.4 1226.9,527.7" fill="#09c9f6" stroke="#031820" stroke-width="0.9" stroke-linejoin="round"/><polygon points="829.0,887.9 841.6,885.9 818.0,945.0" fill="#14afda" stroke="#031820" stroke-width="0.9" stroke-linejoin="round"/><polygon points="849.1,877.0 841.6,885.9 852.1,822.1" fill="#12abd6" stroke="#031820" stroke-width="0.9" stroke-linejoin="round"/><polygon points="841.6,885.9 829.0,887.9 852.1,822.1" fill="#14afdb" stroke="#031820" stroke-width="0.9" stroke-linejoin="round"/><polygon points="878.0,842.8 873.3,829.4 893.2,831.3" fill="#18bae7" stroke="#031820" stroke-width="0.9" stroke-linejoin="round"/><polygon points="873.3,829.4 878.0,842.8 849.1,877.0" fill="#13a2cf" stroke="#031820" stroke-width="0.9" stroke-linejoin="round"/><polygon points="827.9,824.9 852.8,767.4 852.1,822.1" fill="#119fca" stroke="#031820" stroke-width="0.9" stroke-linejoin="round"/><polygon points="826.7,768.1 852.8,767.4 827.9,824.9" fill="#15b3df" stroke="#031820" stroke-width="0.9" stroke-linejoin="round"/><polygon points="981.4,628.9 1006.0,622.8 1004.7,633.8" fill="#15b3df" stroke="#031820" stroke-width="0.9" stroke-linejoin="round"/><polygon points="981.4,628.9 984.1,654.5 973.0,631.0" fill="#13add8" stroke="#031820" stroke-width="0.9" stroke-linejoin="round"/><polygon points="984.1,654.5 981.4,628.9 1004.7,633.8" fill="#14b1dc" stroke="#031820" stroke-width="0.9" stroke-linejoin="round"/><polygon points="1001.0,668.4 984.1,654.5 1004.7,633.8" fill="#08c4f0" stroke="#031820" stroke-width="0.9" stroke-linejoin="round"/><polygon points="984.1,654.5 1001.0,668.4 982.8,683.2" fill="#12abd5" stroke="#031820" stroke-width="0.9" stroke-linejoin="round"/><polygon points="1001.0,668.4 1002.4,696.4 982.8,683.2" fill="#12a1cd" stroke="#031820" stroke-width="0.9" stroke-linejoin="round"/><polygon points="1001.0,668.4 1021.5,669.8 1002.4,696.4" fill="#15b1dd" stroke="#031820" stroke-width="0.9" stroke-linejoin="round"/><polygon points="979.5,743.6 959.0,758.0 960.1,748.0" fill="#04b8e3" stroke="#031820" stroke-width="0.9" stroke-linejoin="round"/><polygon points="981.4,742.7 979.5,743.6 980.3,718.6" fill="#18bae7" stroke="#031820" stroke-width="0.9" stroke-linejoin="round"/><polygon points="979.5,743.6 960.1,748.0 980.3,718.6" fill="#13a3d0" stroke="#031820" stroke-width="0.9" stroke-linejoin="round"/><polygon points="959.0,758.0 948.5,779.3 960.1,748.0" fill="#15b1dd" stroke="#031820" stroke-width="0.9" stroke-linejoin="round"/><polygon points="948.5,779.3 937.3,791.8 937.1,754.7" fill="#14b1dd" stroke="#031820" stroke-width="0.9" stroke-linejoin="round"/><polygon points="960.1,748.0 948.5,779.3 937.1,754.7" fill="#0acbf8" stroke="#031820" stroke-width="0.9" stroke-linejoin="round"/><polygon points="1157.1,601.4 1132.1,619.9 1135.2,595.0" fill="#16b6e2" stroke="#031820" stroke-width="0.9" stroke-linejoin="round"/><polygon points="1157.1,601.4 1158.7,621.5 1132.1,619.9" fill="#109cc7" stroke="#031820" stroke-width="0.9" stroke-linejoin="round"/><polygon points="1161.0,572.4 1157.1,601.4 1135.2,595.0" fill="#12a1cd" stroke="#031820" stroke-width="0.9" stroke-linejoin="round"/><polygon points="1157.1,601.4 1161.0,572.4 1177.3,576.9" fill="#09c9f6" stroke="#031820" stroke-width="0.9" stroke-linejoin="round"/><polygon points="1157.1,601.4 1177.3,576.9 1181.1,606.0" fill="#13add8" stroke="#031820" stroke-width="0.9" stroke-linejoin="round"/><polygon points="1158.7,621.5 1157.1,601.4 1181.1,606.0" fill="#13afda" stroke="#031820" stroke-width="0.9" stroke-linejoin="round"/><polygon points="1071.0,697.0 1088.4,676.3 1113.6,674.7" fill="#16b6e2" stroke="#031820" stroke-width="0.9" stroke-linejoin="round"/><polygon points="1048.5,692.7 1072.6,667.8 1069.5,697.7" fill="#09c7f3" stroke="#031820" stroke-width="0.9" stroke-linejoin="round"/><polygon points="1072.6,667.8 1071.0,697.0 1069.5,697.7" fill="#1abdeb" stroke="#031820" stroke-width="0.9" stroke-linejoin="round"/><polygon points="1071.0,697.0 1072.6,667.8 1088.4,676.3" fill="#08c4f0" stroke="#031820" stroke-width="0.9" stroke-linejoin="round"/><polygon points="1072.6,667.8 1045.2,669.8 1070.2,644.9" fill="#109dc8" stroke="#031820" stroke-width="0.9" stroke-linejoin="round"/><polygon points="1072.6,667.8 1048.5,692.7 1045.2,669.8" fill="#14a4d1" stroke="#031820" stroke-width="0.9" stroke-linejoin="round"/><polygon points="1270.9,589.5 1290.0,562.6 1290.0,590.0" fill="#15a7d4" stroke="#031820" stroke-width="0.9" stroke-linejoin="round"/><polygon points="1245.9,610.6 1270.9,589.5 1290.0,590.0" fill="#13aed9" stroke="#031820" stroke-width="0.9" stroke-linejoin="round"/><polygon points="1290.0,562.6 1270.9,589.5 1267.6,561.2" fill="#13a3cf" stroke="#031820" stroke-width="0.9" stroke-linejoin="round"/><polygon points="1221.1,610.1 1245.9,610.6 1201.8,631.2" fill="#0f99c4" stroke="#031820" stroke-width="0.9" stroke-linejoin="round"/><polygon points="1221.1,610.1 1198.8,605.3 1221.6,583.5" fill="#19bdeb" stroke="#031820" stroke-width="0.9" stroke-linejoin="round"/><polygon points="1198.8,605.3 1221.1,610.1 1201.8,631.2" fill="#05bce6" stroke="#031820" stroke-width="0.9" stroke-linejoin="round"/><polygon points="1198.8,605.3 1202.7,580.4 1221.6,583.5" fill="#12aad4" stroke="#031820" stroke-width="0.9" stroke-linejoin="round"/><polygon points="1202.7,580.4 1198.8,605.3 1181.1,606.0" fill="#0acaf7" stroke="#031820" stroke-width="0.9" stroke-linejoin="round"/><polygon points="1177.3,576.9 1202.7,580.4 1181.1,606.0" fill="#0acbf8" stroke="#031820" stroke-width="0.9" stroke-linejoin="round"/><polygon points="1198.5,558.5 1202.7,580.4 1177.3,576.9" fill="#15a7d4" stroke="#031820" stroke-width="0.9" stroke-linejoin="round"/><polygon points="1090.7,599.1 1091.8,624.5 1065.9,626.1" fill="#15a7d4" stroke="#031820" stroke-width="0.9" stroke-linejoin="round"/><polygon points="1091.8,624.5 1090.7,599.1 1113.1,591.3" fill="#06beea" stroke="#031820" stroke-width="0.9" stroke-linejoin="round"/><polygon points="1201.8,528.0 1206.5,526.4 1198.5,558.5" fill="#17b7e4" stroke="#031820" stroke-width="0.9" stroke-linejoin="round"/><polygon points="1268.4,503.4 1270.0,488.5 1290.0,476.0" fill="#11aad4" stroke="#031820" stroke-width="0.9" stroke-linejoin="round"/><polygon points="1290.0,505.1 1268.4,503.4 1290.0,476.0" fill="#14afda" stroke="#031820" stroke-width="0.9" stroke-linejoin="round"/><polygon points="1267.6,561.2 1268.1,533.7 1290.0,533.8" fill="#13a4d0" stroke="#031820" stroke-width="0.9" stroke-linejoin="round"/><polygon points="1268.1,533.7 1290.0,505.1 1290.0,533.8" fill="#119ec9" stroke="#031820" stroke-width="0.9" stroke-linejoin="round"/><polygon points="1290.0,505.1 1268.1,533.7 1268.4,503.4" fill="#09c9f6" stroke="#031820" stroke-width="0.9" stroke-linejoin="round"/><polygon points="1245.9,503.9 1245.7,528.6 1226.9,527.7" fill="#12a1ce" stroke="#031820" stroke-width="0.9" stroke-linejoin="round"/><polygon points="1268.1,533.7 1245.7,528.6 1268.4,503.4" fill="#15b3df" stroke="#031820" stroke-width="0.9" stroke-linejoin="round"/><polygon points="852.8,767.4 869.1,774.5 852.1,822.1" fill="#109dc9" stroke="#031820" stroke-width="0.9" stroke-linejoin="round"/><polygon points="869.1,774.5 889.5,750.5 893.3,790.4" fill="#17b7e3" stroke="#031820" stroke-width="0.9" stroke-linejoin="round"/><polygon points="869.1,774.5 873.3,829.4 852.1,822.1" fill="#15b1dd" stroke="#031820" stroke-width="0.9" stroke-linejoin="round"/><polygon points="873.3,829.4 869.1,774.5 893.3,790.4" fill="#11a9d3" stroke="#031820" stroke-width="0.9" stroke-linejoin="round"/><polygon points="845.6,722.8 826.7,768.1 829.8,696.7" fill="#0f99c4" stroke="#031820" stroke-width="0.9" stroke-linejoin="round"/><polygon points="845.6,722.8 852.8,767.4 826.7,768.1" fill="#09c8f4" stroke="#031820" stroke-width="0.9" stroke-linejoin="round"/><polygon points="849.1,669.0 845.6,722.8 829.8,696.7" fill="#0e6c8b" stroke="#031820" stroke-width="0.9" stroke-linejoin="round"/><polygon points="845.6,722.8 849.1,669.0 860.0,666.0" fill="#065d79" stroke="#031820" stroke-width="0.9" stroke-linejoin="round"/><polygon points="870.3,683.1 845.6,722.8 860.0,666.0" fill="#065d7a" stroke="#031820" stroke-width="0.9" stroke-linejoin="round"/><polygon points="1025.9,644.1 1001.0,668.4 1004.7,633.8" fill="#13a3d0" stroke="#031820" stroke-width="0.9" stroke-linejoin="round"/><polygon points="1001.0,668.4 1025.9,644.1 1021.5,669.8" fill="#0f9ac5" stroke="#031820" stroke-width="0.9" stroke-linejoin="round"/><polygon points="1021.5,669.8 1025.9,644.1 1049.4,643.5" fill="#16a9d7" stroke="#031820" stroke-width="0.9" stroke-linejoin="round"/><polygon points="1025.9,644.1 1044.9,616.2 1049.4,643.5" fill="#12a1cd" stroke="#031820" stroke-width="0.9" stroke-linejoin="round"/><polygon points="1025.9,644.1 1004.7,633.8 1025.5,615.8" fill="#14afda" stroke="#031820" stroke-width="0.9" stroke-linejoin="round"/><polygon points="1044.9,616.2 1025.9,644.1 1025.5,615.8" fill="#07c3ef" stroke="#031820" stroke-width="0.9" stroke-linejoin="round"/><polygon points="1088.4,676.3 1089.2,652.0 1113.7,649.1" fill="#13aeda" stroke="#031820" stroke-width="0.9" stroke-linejoin="round"/><polygon points="1072.6,667.8 1089.2,652.0 1088.4,676.3" fill="#11a9d4" stroke="#031820" stroke-width="0.9" stroke-linejoin="round"/><polygon points="1113.7,649.1 1089.2,652.0 1113.8,621.6" fill="#09c8f5" stroke="#031820" stroke-width="0.9" stroke-linejoin="round"/><polygon points="1089.2,652.0 1091.8,624.5 1113.8,621.6" fill="#18bae7" stroke="#031820" stroke-width="0.9" stroke-linejoin="round"/><polygon points="1091.8,624.5 1089.2,652.0 1070.2,644.9" fill="#0bcdfb" stroke="#031820" stroke-width="0.9" stroke-linejoin="round"/><polygon points="1089.2,652.0 1072.6,667.8 1070.2,644.9" fill="#0e98c2" stroke="#031820" stroke-width="0.9" stroke-linejoin="round"/><polygon points="1243.1,581.6 1221.1,610.1 1221.6,583.5" fill="#15a8d6" stroke="#031820" stroke-width="0.9" stroke-linejoin="round"/><polygon points="1221.1,610.1 1243.1,581.6 1245.9,610.6" fill="#13aed9" stroke="#031820" stroke-width="0.9" stroke-linejoin="round"/><polygon points="1270.9,589.5 1243.1,581.6 1267.6,561.2" fill="#109bc7" stroke="#031820" stroke-width="0.9" stroke-linejoin="round"/><polygon points="1243.1,581.6 1270.9,589.5 1245.9,610.6" fill="#0e97c2" stroke="#031820" stroke-width="0.9" stroke-linejoin="round"/><polygon points="1176.5,555.6 1159.0,544.2 1182.8,534.7" fill="#17b8e5" stroke="#031820" stroke-width="0.9" stroke-linejoin="round"/><polygon points="1159.0,544.2 1176.5,555.6 1161.0,572.4" fill="#0f9ac5" stroke="#031820" stroke-width="0.9" stroke-linejoin="round"/><polygon points="1161.0,572.4 1176.5,555.6 1177.3,576.9" fill="#0acaf8" stroke="#031820" stroke-width="0.9" stroke-linejoin="round"/><polygon points="1176.5,555.6 1198.5,558.5 1177.3,576.9" fill="#13a3d0" stroke="#031820" stroke-width="0.9" stroke-linejoin="round"/><polygon points="1201.8,528.0 1176.5,555.6 1182.8,534.7" fill="#0accfa" stroke="#031820" stroke-width="0.9" stroke-linejoin="round"/><polygon points="1176.5,555.6 1201.8,528.0 1198.5,558.5" fill="#16b6e2" stroke="#031820" stroke-width="0.9" stroke-linejoin="round"/><polygon points="1138.7,569.8 1161.0,572.4 1135.2,595.0" fill="#06bfea" stroke="#031820" stroke-width="0.9" stroke-linejoin="round"/><polygon points="1113.1,591.3 1138.7,569.8 1135.2,595.0" fill="#12aad5" stroke="#031820" stroke-width="0.9" stroke-linejoin="round"/><polygon points="1138.7,569.8 1114.0,564.4 1135.3,553.7" fill="#13a4d0" stroke="#031820" stroke-width="0.9" stroke-linejoin="round"/><polygon points="1114.0,564.4 1138.7,569.8 1113.1,591.3" fill="#0e98c2" stroke="#031820" stroke-width="0.9" stroke-linejoin="round"/><polygon points="1090.7,599.1 1076.0,591.7 1095.0,577.4" fill="#06c0eb" stroke="#031820" stroke-width="0.9" stroke-linejoin="round"/><polygon points="1076.0,591.7 1065.9,626.1 1069.5,595.1" fill="#08c6f3" stroke="#031820" stroke-width="0.9" stroke-linejoin="round"/><polygon points="1076.0,591.7 1090.7,599.1 1065.9,626.1" fill="#12abd5" stroke="#031820" stroke-width="0.9" stroke-linejoin="round"/><polygon points="1113.6,564.6 1090.7,599.1 1095.0,577.4" fill="#13a3cf" stroke="#031820" stroke-width="0.9" stroke-linejoin="round"/><polygon points="1113.6,564.6 1114.0,564.4 1113.1,591.3" fill="#13add8" stroke="#031820" stroke-width="0.9" stroke-linejoin="round"/><polygon points="1090.7,599.1 1113.6,564.6 1113.1,591.3" fill="#0acaf7" stroke="#031820" stroke-width="0.9" stroke-linejoin="round"/><polygon points="1246.8,503.4 1270.0,488.5 1268.4,503.4" fill="#15b3df" stroke="#031820" stroke-width="0.9" stroke-linejoin="round"/><polygon points="1246.8,503.4 1245.7,528.6 1245.9,503.9" fill="#19bdea" stroke="#031820" stroke-width="0.9" stroke-linejoin="round"/><polygon points="1245.7,528.6 1246.8,503.4 1268.4,503.4" fill="#14a5d2" stroke="#031820" stroke-width="0.9" stroke-linejoin="round"/><polygon points="870.2,735.6 845.6,722.8 870.3,683.1" fill="#15b2de" stroke="#031820" stroke-width="0.9" stroke-linejoin="round"/><polygon points="845.6,722.8 870.2,735.6 852.8,767.4" fill="#05bde8" stroke="#031820" stroke-width="0.9" stroke-linejoin="round"/><polygon points="870.2,735.6 870.3,683.1 894.5,705.1" fill="#0bcefb" stroke="#031820" stroke-width="0.9" stroke-linejoin="round"/><polygon points="889.5,750.5 870.2,735.6 894.5,705.1" fill="#13a4d0" stroke="#031820" stroke-width="0.9" stroke-linejoin="round"/><polygon points="869.1,774.5 870.2,735.6 889.5,750.5" fill="#17b8e4" stroke="#031820" stroke-width="0.9" stroke-linejoin="round"/><polygon points="870.2,735.6 869.1,774.5 852.8,767.4" fill="#12aad5" stroke="#031820" stroke-width="0.9" stroke-linejoin="round"/><polygon points="1249.4,553.2 1268.1,533.7 1267.6,561.2" fill="#09c9f6" stroke="#031820" stroke-width="0.9" stroke-linejoin="round"/><polygon points="1243.1,581.6 1249.4,553.2 1267.6,561.2" fill="#05bce6" stroke="#031820" stroke-width="0.9" stroke-linejoin="round"/><polygon points="1249.4,553.2 1245.7,528.6 1268.1,533.7" fill="#14afdb" stroke="#031820" stroke-width="0.9" stroke-linejoin="round"/><polygon points="1249.4,553.2 1243.1,581.6 1221.6,583.5" fill="#0f9ac5" stroke="#031820" stroke-width="0.9" stroke-linejoin="round"/><polygon points="1157.7,544.7 1138.7,569.8 1135.3,553.7" fill="#09c7f3" stroke="#031820" stroke-width="0.9" stroke-linejoin="round"/><polygon points="1157.7,544.7 1159.0,544.2 1161.0,572.4" fill="#19bdeb" stroke="#031820" stroke-width="0.9" stroke-linejoin="round"/><polygon points="1138.7,569.8 1157.7,544.7 1161.0,572.4" fill="#12abd6" stroke="#031820" stroke-width="0.9" stroke-linejoin="round"/><polygon points="1249.4,553.2 1226.3,552.0 1245.7,528.6" fill="#07c2ee" stroke="#031820" stroke-width="0.9" stroke-linejoin="round"/><polygon points="1226.3,552.0 1202.7,580.4 1198.5,558.5" fill="#12a1ce" stroke="#031820" stroke-width="0.9" stroke-linejoin="round"/><polygon points="1202.7,580.4 1226.3,552.0 1221.6,583.5" fill="#16b4e0" stroke="#031820" stroke-width="0.9" stroke-linejoin="round"/><polygon points="1226.3,552.0 1249.4,553.2 1221.6,583.5" fill="#17b6e3" stroke="#031820" stroke-width="0.9" stroke-linejoin="round"/><polygon points="1226.3,552.0 1198.5,558.5 1226.9,527.7" fill="#14b0db" stroke="#031820" stroke-width="0.9" stroke-linejoin="round"/><polygon points="1245.7,528.6 1226.3,552.0 1226.9,527.7" fill="#15b3df" stroke="#031820" stroke-width="0.9" stroke-linejoin="round"/><path d="M638 832 L588.5 744.1 M638 832 L597.8 746.7 M638 832 L606.8 749.1 M638 832 L616.2 751.7 M638 832 L624.1 753.8 M638 832 L633.6 756.4 M638 832 L638.5 757.7 M638 832 L649.1 760.7 M638 832 L660.0 763.6 M638 832 L667.4 765.6 M638 832 L677.3 768.3 M638 832 L682.6 769.8 M638 832 L692.9 772.6 M638 832 L701.9 773.9 M638 832 L701.3 784.0 M638 832 L700.9 792.9 M638 832 L700.6 799.2 M638 832 L700.1 808.8 M638 832 L699.6 817.9 M638 832 L699.0 829.4 M638 832 L698.6 837.5 M638 832 L698.3 843.7 M638 832 L697.7 855.2 M638 832 L697.4 861.1 M638 832 L696.9 872.0 M638 832 L696.5 878.6 M638 832 L698.2 888.9 M638 832 L685.4 889.5 M638 832 L679.4 889.7 M638 832 L670.4 890.1 M638 832 L658.1 890.6 M638 832 L649.6 891.0 M638 832 L643.3 891.3 M638 832 L631.3 891.8 M638 832 L624.3 892.1 M638 832 L614.7 892.5 M638 832 L607.9 892.8 M638 832 L595.6 893.3 M638 832 L587.8 893.7 M638 832 L579.8 891.3 M638 832 L580.5 880.2 M638 832 L580.9 872.1 M638 832 L581.6 860.2 M638 832 L582.1 849.8 M638 832 L582.8 838.4 M638 832 L583.4 827.3 M638 832 L584.1 814.4 M638 832 L584.8 801.1 M638 832 L585.3 793.0 M638 832 L586.1 777.6 M638 832 L586.7 768.0 M638 832 L587.3 756.6 M588.0 744.0 L701.8 775.0 L696.0 889.0 L579.7 894.0 Z M699.0 829.4 L649.6 891.0 M582.8 838.4 L606.8 749.1 M682.6 769.8 L697.4 861.1 M658.1 890.6 L595.6 893.3 M616.2 751.7 L692.9 772.6 M597.8 746.7 L682.6 769.8 M696.5 878.6 L658.1 890.6 M614.7 892.5 L584.1 814.4 M697.4 861.1 L624.3 892.1 M595.6 893.3 L581.6 860.2" stroke="#031820" stroke-width="0.9" fill="none"/><path d="M634 826 L641 825 L646 839 L635 840Z" fill="#ff0000"/></g></svg><svg style="position:absolute;left:280px;top:800px" width="100" height="90" viewBox="280 800 100 90">
<path d="M321.5 864 L322.6 830" stroke="#10d010" stroke-width="5"/>
<path d="M317.8 832 L322.6 815 L326.8 832Z" fill="#10e010"/>
<path d="M321.5 864 L351 873" stroke="#e01010" stroke-width="5"/>
<path d="M350 868 L364.5 877 L348.5 878.5Z" fill="#f01010"/>
<path d="M321.5 864 L303 873.5" stroke="#1010c0" stroke-width="5"/>
<path d="M302.5 867.5 L292 879.5 L306 878.5Z" fill="#1010d0"/>
<text x="318" y="815" font-size="11" font-family="Liberation Sans">Y</text>
<text x="364" y="883" font-size="11" font-family="Liberation Sans">X</text>
<text x="284" y="885" font-size="11" font-family="Liberation Sans">Z</text>
</svg><div style="position:absolute;left:1px;top:211px;width:205px;height:731px;background:#f0f0f0"></div><div style="position:absolute;left:206px;top:211px;width:7px;height:731px;background:linear-gradient(90deg,#8eaad2,#b4cff0 60%,#c9d9ec)"></div><div style="position:absolute;left:1px;top:677px;width:205px;height:18px;background:linear-gradient(#e6e6e6,#ececec)"></div><div style="position:absolute;left:103px;top:677px;width:1px;height:18px;background:#b0c4e0"></div><div style="position:absolute;left:1px;top:695px;width:205px;height:55px;background:linear-gradient(#c6d6e8,#d4e2f0);border:1px solid #a8c0dc;box-sizing:border-box"></div><div style="position:absolute;left:1px;top:750px;width:205px;height:5px;background:#c7dcf6"></div><div style="position:absolute;left:1px;top:755px;width:205px;height:29px;background:#b8cfea"></div><div style="position:absolute;left:6.00px;top:758.00px;line-height:20px;white-space:nowrap;font-family:'Liberation Sans', sans-serif;font-size:15px;color:#3a5e9e;transform:scaleX(0.8610);transform-origin:0 50%;">情報 ウィンドウ</div><svg style="position:absolute;left:174px;top:762px" width="30" height="12"><path d="M2 1 H9 M3.5 1 V7 M7.5 1 V7 M1.5 7 H10 M5.5 7 V11" stroke="#3a5e9e" stroke-width="1.2" fill="none"/><path d="M17 1.5 L25 9.5 M25 1.5 L17 9.5" stroke="#3a5e9e" stroke-width="1.4"/></svg><div style="position:absolute;left:1px;top:784px;width:205px;height:27px;background:linear-gradient(#e4effd,#d2e3f9 60%,#bed6f3)"></div><svg style="position:absolute;left:14px;top:788px" width="20" height="18"><path d="M8 1 L1 15 L9 17 L16 13Z" fill="#a8d8b0" stroke="#222" stroke-width="1"/><path d="M8 1 L9 17" stroke="#222" stroke-width="1"/></svg><svg style="position:absolute;left:37px;top:796px" width="7" height="4"><path d="M0 0 H7 L3.5 4Z" fill="#5a7eb0"/></svg><div style="position:absolute;left:45px;top:785px;width:21px;height:24px;background:linear-gradient(#fde2bc,#fbb766 40%,#fcd27e 70%,#fde898);border:1px solid #9ab4d8;box-sizing:border-box;border-radius:2px"></div><svg style="position:absolute;left:48px;top:789px" width="16" height="16"><circle cx="8.3" cy="8" r="4.3" fill="#e81c00"/><path d="M8.3 1.5 V14.5 M1.5 8 H15" stroke="#e81c00" stroke-width="1"/></svg><div style="position:absolute;left:73px;top:790px;width:11px;height:13px;background:#7a3a0a;border-top:2px solid #8a8a8a;box-sizing:border-box"></div><div style="position:absolute;left:79px;top:795px;width:6px;height:9px;background:#fff"></div><div style="position:absolute;left:1px;top:811px;width:205px;height:130px;background:#f0f0f0;border-top:1px solid #a0b4cc;box-sizing:border-box"></div><div style="position:absolute;left:2.00px;top:812.00px;line-height:22px;white-space:nowrap;font-family:'Liberation Sans', sans-serif;font-size:17px;color:#111;transform:scaleX(0.9305);transform-origin:0 50%;">編集中は使用できません</div><div style="position:absolute;left:3px;top:843px;width:2px;height:2px;background:#111"></div><div style="position:absolute;left:188px;top:812px;width:18px;height:128px;background:#f0f0f0;border-left:1px solid #e2e2e2"></div><svg style="position:absolute;left:191px;top:817px" width="12" height="8"><path d="M1 7 L6 1.5 L11 7Z" fill="#9a9a9a"/></svg><svg style="position:absolute;left:191px;top:928px" width="12" height="8"><path d="M1 1 L6 6.5 L11 1Z" fill="#9a9a9a"/></svg><div style="position:absolute;left:1px;top:31px;width:8px;height:150px;background:linear-gradient(90deg,#a9c8ee,#c0dbfb)"></div><div style="position:absolute;left:2px;top:60px;width:7px;height:29px;background:linear-gradient(#e2edfb,#c4d9f3);border-bottom:1px solid #7ea4d6;border-radius:3px 0 0 0;box-sizing:border-box"></div><div style="position:absolute;left:5px;top:67.0px;width:2px;height:2px;background:#4a78b8"></div><div style="position:absolute;left:5px;top:70.5px;width:2px;height:2px;background:#4a78b8"></div><div style="position:absolute;left:5px;top:74.0px;width:2px;height:2px;background:#4a78b8"></div><div style="position:absolute;left:5px;top:77.5px;width:2px;height:2px;background:#4a78b8"></div><div style="position:absolute;left:5px;top:81.0px;width:2px;height:2px;background:#4a78b8"></div><div style="position:absolute;left:2px;top:89px;width:7px;height:29px;background:linear-gradient(#e2edfb,#c4d9f3);border-bottom:1px solid #7ea4d6;border-radius:3px 0 0 0;box-sizing:border-box"></div><div style="position:absolute;left:5px;top:96.0px;width:2px;height:2px;background:#4a78b8"></div><div style="position:absolute;left:5px;top:99.5px;width:2px;height:2px;background:#4a78b8"></div><div style="position:absolute;left:5px;top:103.0px;width:2px;height:2px;background:#4a78b8"></div><div style="position:absolute;left:5px;top:106.5px;width:2px;height:2px;background:#4a78b8"></div><div style="position:absolute;left:5px;top:110.0px;width:2px;height:2px;background:#4a78b8"></div><div style="position:absolute;left:2px;top:119px;width:7px;height:29px;background:linear-gradient(#e2edfb,#c4d9f3);border-bottom:1px solid #7ea4d6;border-radius:3px 0 0 0;box-sizing:border-box"></div><div style="position:absolute;left:5px;top:126.0px;width:2px;height:2px;background:#4a78b8"></div><div style="position:absolute;left:5px;top:129.5px;width:2px;height:2px;background:#4a78b8"></div><div style="position:absolute;left:5px;top:133.0px;width:2px;height:2px;background:#4a78b8"></div><div style="position:absolute;left:5px;top:136.5px;width:2px;height:2px;background:#4a78b8"></div><div style="position:absolute;left:5px;top:140.0px;width:2px;height:2px;background:#4a78b8"></div><div style="position:absolute;left:2px;top:149px;width:7px;height:29px;background:linear-gradient(#e2edfb,#c4d9f3);border-bottom:1px solid #7ea4d6;border-radius:3px 0 0 0;box-sizing:border-box"></div><div style="position:absolute;left:5px;top:156.0px;width:2px;height:2px;background:#4a78b8"></div><div style="position:absolute;left:5px;top:159.5px;width:2px;height:2px;background:#4a78b8"></div><div style="position:absolute;left:5px;top:163.0px;width:2px;height:2px;background:#4a78b8"></div><div style="position:absolute;left:5px;top:166.5px;width:2px;height:2px;background:#4a78b8"></div><div style="position:absolute;left:5px;top:170.0px;width:2px;height:2px;background:#4a78b8"></div><div style="position:absolute;left:1px;top:178px;width:8px;height:31px;background:linear-gradient(#a4b6cc,#b2c2d6)"></div><div style="position:absolute;left:1px;top:209px;width:8px;height:468px;background:#ececec"></div><div style="position:absolute;left:1px;top:942px;width:1274px;height:26px;background:linear-gradient(#d6e6fa,#c8dcf5 50%,#bcd3f0);border-top:1px solid #5a86c0;box-shadow:inset 0 1px 0 #fff;box-sizing:border-box;border-radius:0 0 8px 8px"></div><div style="position:absolute;left:5.00px;top:944.80px;line-height:20px;white-space:nowrap;font-family:'Liberation Sans', sans-serif;font-size:15px;color:#1e3c78;transform:scaleX(0.8739);transform-origin:0 50%;">操作：標準&nbsp;&nbsp;左：アイテム選択 右：メニュー</div><div style="position:absolute;left:797px;top:944px;width:1px;height:24px;background:#9ab6dc"></div><div style="position:absolute;left:798px;top:944px;width:1px;height:24px;background:#eaf2fd"></div><div style="position:absolute;left:861px;top:944px;width:1px;height:24px;background:#9ab6dc"></div><div style="position:absolute;left:862px;top:944px;width:1px;height:24px;background:#eaf2fd"></div><div style="position:absolute;left:939px;top:944px;width:1px;height:24px;background:#9ab6dc"></div><div style="position:absolute;left:940px;top:944px;width:1px;height:24px;background:#eaf2fd"></div><div style="position:absolute;left:1075px;top:944px;width:1px;height:24px;background:#9ab6dc"></div><div style="position:absolute;left:1076px;top:944px;width:1px;height:24px;background:#eaf2fd"></div><div style="position:absolute;left:1166px;top:944px;width:1px;height:24px;background:#9ab6dc"></div><div style="position:absolute;left:1167px;top:944px;width:1px;height:24px;background:#eaf2fd"></div><div style="position:absolute;left:1256px;top:944px;width:1px;height:24px;background:#9ab6dc"></div><div style="position:absolute;left:1257px;top:944px;width:1px;height:24px;background:#eaf2fd"></div><div style="position:absolute;left:803px;top:950px;width:12px;height:12px;background:#0b8a1e;border-radius:50%;border:1px solid #064d10;box-sizing:border-box"></div><div style="position:absolute;left:821.00px;top:944.80px;line-height:20px;white-space:nowrap;font-family:'Liberation Sans', sans-serif;font-size:15px;color:#1e3c78;transform:scaleX(0.8222);transform-origin:0 50%;">モデル</div><div style="position:absolute;left:867px;top:952px;width:6px;height:6px;background:#e8380c;border:1px solid #222;box-sizing:border-box"></div><div style="position:absolute;left:875px;top:952px;width:6px;height:6px;background:#f2b21c;border:1px solid #222;box-sizing:border-box"></div><div style="position:absolute;left:885.00px;top:944.80px;line-height:20px;white-space:nowrap;font-family:'Liberation Sans', sans-serif;font-size:15px;color:#1e3c78;transform:scaleX(0.8750);transform-origin:0 50%;">解析結果</div><svg style="position:absolute;left:944px;top:948px" width="15" height="15"><circle cx="7.5" cy="7.5" r="6" fill="#ddd" stroke="#444" stroke-width="1.2"/><circle cx="7.5" cy="7.5" r="3" fill="none" stroke="#444" stroke-width="1.2"/></svg><div style="position:absolute;left:963.50px;top:944.80px;line-height:20px;white-space:nowrap;font-family:'Liberation Sans', sans-serif;font-size:15px;color:#8a8a8a;transform:scaleX(0.8667);transform-origin:0 50%;">最適化パラメータ</div><div style="position:absolute;left:1079.00px;top:944.80px;line-height:20px;white-space:nowrap;font-family:'Liberation Sans', sans-serif;font-size:15px;color:#1e3c78;transform:scaleX(0.8996);transform-origin:0 50%;">節点数：4435</div><div style="position:absolute;left:1170.00px;top:944.80px;line-height:20px;white-space:nowrap;font-family:'Liberation Sans', sans-serif;font-size:15px;color:#1e3c78;transform:scaleX(0.8996);transform-origin:0 50%;">要素数：2425</div><div style="position:absolute;left:1270px;top:954px;width:2px;height:2px;background:#7a98c0"></div><div style="position:absolute;left:1266px;top:958px;width:2px;height:2px;background:#7a98c0"></div><div style="position:absolute;left:1270px;top:958px;width:2px;height:2px;background:#7a98c0"></div><div style="position:absolute;left:1262px;top:962px;width:2px;height:2px;background:#7a98c0"></div><div style="position:absolute;left:1266px;top:962px;width:2px;height:2px;background:#7a98c0"></div><div style="position:absolute;left:1270px;top:962px;width:2px;height:2px;background:#7a98c0"></div><div style="position:absolute;left:9px;top:31px;width:940px;height:646px;background:#f0f0f0;border-radius:8px;box-shadow:0 0 22px rgba(0,0,0,0.2), 0 42px 70px -30px rgba(0,0,0,0.46), 0 0 0 1px rgba(0,0,0,0.12)"></div><div style="position:absolute;left:9px;top:31px;width:940px;height:31px;background:#f3f3f3;border-radius:8px 8px 0 0"></div><div style="position:absolute;left:18.00px;top:37.40px;line-height:17px;white-space:nowrap;font-family:'Liberation Sans', sans-serif;font-size:13px;color:#111;-webkit-text-stroke:0.25px #000;transform:scaleX(0.7615);transform-origin:0 50%;">ボード線図</div><svg style="position:absolute;left:928px;top:40px" width="12" height="12"><path d="M1 1 L11 11 M11 1 L1 11" stroke="#111" stroke-width="1.1"/></svg><div style="position:absolute;left:21px;top:71px;width:914px;height:276px;background:#fff;border:1.5px solid #000;box-sizing:border-box"></div><div style="position:absolute;left:21px;top:355px;width:914px;height:89px;background:#fff;border:1.5px solid #000;box-sizing:border-box"></div><svg style="position:absolute;left:0;top:0" width="1276" height="969"><path d="M81.5 303.15 H914.0 M81.5 294.88 H914.0 M81.5 289.00 H914.0 M81.5 284.45 H914.0 M81.5 280.73 H914.0 M81.5 277.58 H914.0 M81.5 274.85 H914.0 M81.5 272.45 H914.0 M81.5 256.15 H914.0 M81.5 247.88 H914.0 M81.5 242.00 H914.0 M81.5 237.45 H914.0 M81.5 233.73 H914.0 M81.5 230.58 H914.0 M81.5 227.85 H914.0 M81.5 225.45 H914.0 M81.5 270.30 H914.0 M81.5 209.15 H914.0 M81.5 200.88 H914.0 M81.5 195.00 H914.0 M81.5 190.45 H914.0 M81.5 186.73 H914.0 M81.5 183.58 H914.0 M81.5 180.85 H914.0 M81.5 178.45 H914.0 M81.5 223.30 H914.0 M81.5 162.15 H914.0 M81.5 153.88 H914.0 M81.5 148.00 H914.0 M81.5 143.45 H914.0 M81.5 139.73 H914.0 M81.5 136.58 H914.0 M81.5 133.85 H914.0 M81.5 131.45 H914.0 M81.5 176.30 H914.0 M81.5 115.15 H914.0 M81.5 106.88 H914.0 M81.5 101.00 H914.0 M81.5 96.45 H914.0 M81.5 92.73 H914.0 M81.5 89.58 H914.0 M81.5 86.85 H914.0 M81.5 84.45 H914.0 M81.5 129.30 H914.0 M164.75 81.5 V316.0 M248.00 81.5 V316.0 M331.25 81.5 V316.0 M414.50 81.5 V316.0 M497.75 81.5 V316.0 M581.00 81.5 V316.0 M664.25 81.5 V316.0 M747.50 81.5 V316.0 M830.75 81.5 V316.0" stroke="#c4c4c4" stroke-width="1" fill="none" shape-rendering="crispEdges"/><rect x="81.5" y="81.5" width="832.5" height="234.5" fill="none" stroke="#000" stroke-width="1.5"/><polyline points="82.1,294.9 83.8,257 85.1,226.7 87.6,196.3 88.9,181.2 90.7,109.1 91.4,155.9 92.7,186.2 95.2,195 100.3,200.1 112.9,203.9 125.6,207 135.7,211.5 142,217.8 147,226.7 149.6,236.8 152.1,274.7 153.9,246.9 158.4,216.6 163.5,188.8 166.5,166 169,138.2 170.5,121.8 172.3,150.8 176.1,171 186.2,183.7 198.9,188.8 226.7,192.5 252,195.8 277.2,198.4 302.5,201.9 315.1,206.4 325.3,215.3 330.3,224.1 334.1,236.8 336.6,250.7 339.2,236.8 344.2,206.4 350.5,181.2 355.6,160.9 359.4,135.7 361.9,145.8 365.7,163.5 373.3,173.1 395,183.7 415.3,186.7 498.7,193.3 541.7,196.8 582.1,201.9 599.8,208.5 612.4,219.1 618.8,230.5 623.1,241.8 627.6,226.7 635.2,201.4 642.8,178.6 647.8,161 652.9,143.8 660.5,162.2 668.1,171.1 683.2,178.6 710,186.2 748,191.3 831.5,202.7 851.7,209 866.9,217.1 877,226.7 884.6,240.6 889.1,249 893.4,241.9 899.7,224.2 907.3,212.8 914.2,204.5" fill="none" stroke="#0000ff" stroke-width="1.05" stroke-linejoin="round"/><path d="M81.5 390.5 H914.0 M164.75 365.5 V414.5 M248.00 365.5 V414.5 M331.25 365.5 V414.5 M414.50 365.5 V414.5 M497.75 365.5 V414.5 M581.00 365.5 V414.5 M664.25 365.5 V414.5 M747.50 365.5 V414.5 M830.75 365.5 V414.5" stroke="#c4c4c4" stroke-width="1" fill="none" shape-rendering="crispEdges"/><rect x="81.5" y="365.5" width="832.5" height="49.0" fill="none" stroke="#000" stroke-width="1.5"/><polyline points="81.5,391 90,391 90.5,414.5 150,414.5 151.5,408 153,394 156,391.5 162,391 168,391.5 170.5,395 171.5,408 172.5,414.5 329.5,414.5 331.5,410 333,396 335.5,392.5 340,392 355,392 357.5,393 359,398 360,410 362,414 366,414.5 608,414.5 613,413 617,408 621,399 626,394.5 635,393.5 645,394.5 650,398 654,405 658,412 663,414.5 876,414.5 880,413 884,409 888,404 893,397 898,394.5 906,393.8 914.5,392" fill="none" stroke="#0000ff" stroke-width="1.5" stroke-linejoin="round"/><circle cx="81.5" cy="391" r="2" fill="#0000ff"/><circle cx="914.5" cy="392" r="2" fill="#0000ff"/></svg><div style="position:absolute;left:35.60px;top:73.00px;line-height:17px;white-space:nowrap;font-family:'Liberation Sans', sans-serif;font-size:13px;color:#000;transform:scale(1.1981,1.3600);transform-origin:0 50%;">1e+4</div><div style="position:absolute;left:35.60px;top:120.00px;line-height:17px;white-space:nowrap;font-family:'Liberation Sans', sans-serif;font-size:13px;color:#000;transform:scale(1.1981,1.3600);transform-origin:0 50%;">1e+3</div><div style="position:absolute;left:35.60px;top:167.00px;line-height:17px;white-space:nowrap;font-family:'Liberation Sans', sans-serif;font-size:13px;color:#000;transform:scale(1.0784,1.3600);transform-origin:0 50%;">100.0</div><div style="position:absolute;left:43.60px;top:214.00px;line-height:17px;white-space:nowrap;font-family:'Liberation Sans', sans-serif;font-size:13px;color:#000;transform:scale(1.0706,1.3600);transform-origin:0 50%;">10.0</div><div style="position:absolute;left:50.70px;top:260.50px;line-height:17px;white-space:nowrap;font-family:'Liberation Sans', sans-serif;font-size:13px;color:#000;transform:scale(1.1063,1.3600);transform-origin:0 50%;">1.0</div><div style="position:absolute;left:50.70px;top:307.50px;line-height:17px;white-space:nowrap;font-family:'Liberation Sans', sans-serif;font-size:13px;color:#000;transform:scale(1.1063,1.3600);transform-origin:0 50%;">0.1</div><div style="position:absolute;left:77.80px;top:317.00px;line-height:17px;white-space:nowrap;font-family:'Liberation Sans', sans-serif;font-size:13px;color:#000;transform:scale(1.0229,1.3600);transform-origin:0 50%;">0</div><div style="position:absolute;left:77.80px;top:415.00px;line-height:17px;white-space:nowrap;font-family:'Liberation Sans', sans-serif;font-size:13px;color:#000;transform:scale(1.0229,1.3600);transform-origin:0 50%;">0</div><div style="position:absolute;left:153.65px;top:317.00px;line-height:17px;white-space:nowrap;font-family:'Liberation Sans', sans-serif;font-size:13px;color:#000;transform:scale(1.0229,1.3600);transform-origin:0 50%;">400</div><div style="position:absolute;left:153.65px;top:415.00px;line-height:17px;white-space:nowrap;font-family:'Liberation Sans', sans-serif;font-size:13px;color:#000;transform:scale(1.0229,1.3600);transform-origin:0 50%;">400</div><div style="position:absolute;left:236.90px;top:317.00px;line-height:17px;white-space:nowrap;font-family:'Liberation Sans', sans-serif;font-size:13px;color:#000;transform:scale(1.0229,1.3600);transform-origin:0 50%;">800</div><div style="position:absolute;left:236.90px;top:415.00px;line-height:17px;white-space:nowrap;font-family:'Liberation Sans', sans-serif;font-size:13px;color:#000;transform:scale(1.0229,1.3600);transform-origin:0 50%;">800</div><div style="position:absolute;left:316.45px;top:317.00px;line-height:17px;white-space:nowrap;font-family:'Liberation Sans', sans-serif;font-size:13px;color:#000;transform:scale(1.0234,1.3600);transform-origin:0 50%;">1200</div><div style="position:absolute;left:316.45px;top:415.00px;line-height:17px;white-space:nowrap;font-family:'Liberation Sans', sans-serif;font-size:13px;color:#000;transform:scale(1.0234,1.3600);transform-origin:0 50%;">1200</div><div style="position:absolute;left:399.70px;top:317.00px;line-height:17px;white-space:nowrap;font-family:'Liberation Sans', sans-serif;font-size:13px;color:#000;transform:scale(1.0234,1.3600);transform-origin:0 50%;">1600</div><div style="position:absolute;left:399.70px;top:415.00px;line-height:17px;white-space:nowrap;font-family:'Liberation Sans', sans-serif;font-size:13px;color:#000;transform:scale(1.0234,1.3600);transform-origin:0 50%;">1600</div><div style="position:absolute;left:482.95px;top:317.00px;line-height:17px;white-space:nowrap;font-family:'Liberation Sans', sans-serif;font-size:13px;color:#000;transform:scale(1.0234,1.3600);transform-origin:0 50%;">2000</div><div style="position:absolute;left:482.95px;top:415.00px;line-height:17px;white-space:nowrap;font-family:'Liberation Sans', sans-serif;font-size:13px;color:#000;transform:scale(1.0234,1.3600);transform-origin:0 50%;">2000</div><div style="position:absolute;left:566.20px;top:317.00px;line-height:17px;white-space:nowrap;font-family:'Liberation Sans', sans-serif;font-size:13px;color:#000;transform:scale(1.0234,1.3600);transform-origin:0 50%;">2400</div><div style="position:absolute;left:566.20px;top:415.00px;line-height:17px;white-space:nowrap;font-family:'Liberation Sans', sans-serif;font-size:13px;color:#000;transform:scale(1.0234,1.3600);transform-origin:0 50%;">2400</div><div style="position:absolute;left:649.45px;top:317.00px;line-height:17px;white-space:nowrap;font-family:'Liberation Sans', sans-serif;font-size:13px;color:#000;transform:scale(1.0234,1.3600);transform-origin:0 50%;">2800</div><div style="position:absolute;left:649.45px;top:415.00px;line-height:17px;white-space:nowrap;font-family:'Liberation Sans', sans-serif;font-size:13px;color:#000;transform:scale(1.0234,1.3600);transform-origin:0 50%;">2800</div><div style="position:absolute;left:732.70px;top:317.00px;line-height:17px;white-space:nowrap;font-family:'Liberation Sans', sans-serif;font-size:13px;color:#000;transform:scale(1.0234,1.3600);transform-origin:0 50%;">3200</div><div style="position:absolute;left:732.70px;top:415.00px;line-height:17px;white-space:nowrap;font-family:'Liberation Sans', sans-serif;font-size:13px;color:#000;transform:scale(1.0234,1.3600);transform-origin:0 50%;">3200</div><div style="position:absolute;left:815.95px;top:317.00px;line-height:17px;white-space:nowrap;font-family:'Liberation Sans', sans-serif;font-size:13px;color:#000;transform:scale(1.0234,1.3600);transform-origin:0 50%;">3600</div><div style="position:absolute;left:815.95px;top:415.00px;line-height:17px;white-space:nowrap;font-family:'Liberation Sans', sans-serif;font-size:13px;color:#000;transform:scale(1.0234,1.3600);transform-origin:0 50%;">3600</div><div style="position:absolute;left:899.20px;top:317.00px;line-height:17px;white-space:nowrap;font-family:'Liberation Sans', sans-serif;font-size:13px;color:#000;transform:scale(1.0234,1.3600);transform-origin:0 50%;">4000</div><div style="position:absolute;left:899.20px;top:415.00px;line-height:17px;white-space:nowrap;font-family:'Liberation Sans', sans-serif;font-size:13px;color:#000;transform:scale(1.0234,1.3600);transform-origin:0 50%;">4000</div><div style="position:absolute;left:48.50px;top:356.50px;line-height:17px;white-space:nowrap;font-family:'Liberation Sans', sans-serif;font-size:13px;color:#000;transform:scale(1.0229,1.3600);transform-origin:0 50%;">180</div><div style="position:absolute;left:63.50px;top:382.00px;line-height:17px;white-space:nowrap;font-family:'Liberation Sans', sans-serif;font-size:13px;color:#000;transform:scale(0.9952,1.3600);transform-origin:0 50%;">0</div><div style="position:absolute;left:37.60px;top:406.00px;line-height:17px;white-space:nowrap;font-family:'Liberation Sans', sans-serif;font-size:13px;color:#000;transform:scale(1.1298,1.3600);transform-origin:0 50%;">&minus;180</div><div style="position:absolute;left:29.70px;top:458.40px;line-height:17px;white-space:nowrap;font-family:'Liberation Sans', sans-serif;font-size:13px;color:#111;-webkit-text-stroke:0.25px #000;transform:scaleX(0.7474);transform-origin:0 50%;">グラフの種類</div><div style="position:absolute;left:108px;top:459px;width:105px;height:18px;background:#f8f8f8;border:1px solid #e8e8e8;border-bottom-color:#e0e0e0;border-radius:3px;box-sizing:border-box"></div><svg style="position:absolute;left:200px;top:465.0px" width="9" height="6"><path d="M0.7 0.7 L4.5 4.5 L8.3 0.7" fill="none" stroke="#b0b0b0" stroke-width="1"/></svg><div style="position:absolute;left:110.60px;top:458.90px;line-height:17px;white-space:nowrap;font-family:'Liberation Sans', sans-serif;font-size:13px;color:#9a9a9a;transform:scaleX(0.9138);transform-origin:0 50%;">加速度振幅</div><div style="position:absolute;left:221px;top:459px;width:106px;height:18px;background:#fff;border:1px solid #cfcfcf;border-bottom-color:#b5b5b5;border-radius:3px;box-sizing:border-box"></div><svg style="position:absolute;left:314px;top:465.0px" width="9" height="6"><path d="M0.7 0.7 L4.5 4.5 L8.3 0.7" fill="none" stroke="#444" stroke-width="1"/></svg><div style="position:absolute;left:225.00px;top:458.90px;line-height:17px;white-space:nowrap;font-family:'Liberation Sans', sans-serif;font-size:13px;color:#000;-webkit-text-stroke:0.25px #000;transform:scaleX(0.8974);transform-origin:0 50%;">片対数</div><div style="position:absolute;left:336px;top:459px;width:106px;height:18px;background:#fff;border:1px solid #cfcfcf;border-bottom-color:#b5b5b5;border-radius:3px;box-sizing:border-box"></div><svg style="position:absolute;left:429px;top:465.0px" width="9" height="6"><path d="M0.7 0.7 L4.5 4.5 L8.3 0.7" fill="none" stroke="#444" stroke-width="1"/></svg><div style="position:absolute;left:339.60px;top:458.90px;line-height:17px;white-space:nowrap;font-family:'Liberation Sans', sans-serif;font-size:13px;color:#000;-webkit-text-stroke:0.25px #000;transform:scaleX(0.8547);transform-origin:0 50%;">&minus;180度〜+180度</div><div style="position:absolute;left:17px;top:493px;width:925px;height:44px;border:1px solid #dcdcdc;box-sizing:border-box"></div><div style="position:absolute;left:22px;top:486px;width:58px;height:14px;background:#f0f0f0"></div><div style="position:absolute;left:24.70px;top:483.90px;line-height:17px;white-space:nowrap;font-family:'Liberation Sans', sans-serif;font-size:13px;color:#111;-webkit-text-stroke:0.25px #000;transform:scaleX(0.6795);transform-origin:0 50%;">グラフデータ</div><div style="position:absolute;left:29.70px;top:502.40px;line-height:17px;white-space:nowrap;font-family:'Liberation Sans', sans-serif;font-size:13px;color:#111;-webkit-text-stroke:0.25px #000;transform:scaleX(0.8934);transform-origin:0 50%;">固有振動解析の</div><div style="position:absolute;left:29.70px;top:513.40px;line-height:17px;white-space:nowrap;font-family:'Liberation Sans', sans-serif;font-size:13px;color:#111;-webkit-text-stroke:0.25px #000;transform:scaleX(0.7123);transform-origin:0 50%;">サブケース</div><div style="position:absolute;left:130px;top:508.5px;width:83px;height:18.5px;background:#fff;border:1px solid #cfcfcf;border-bottom-color:#b5b5b5;border-radius:3px;box-sizing:border-box"></div><svg style="position:absolute;left:200px;top:514.75px" width="9" height="6"><path d="M0.7 0.7 L4.5 4.5 L8.3 0.7" fill="none" stroke="#444" stroke-width="1"/></svg><div style="position:absolute;left:134.00px;top:508.90px;line-height:17px;white-space:nowrap;font-family:'Liberation Sans', sans-serif;font-size:13px;color:#000;-webkit-text-stroke:0.25px #000;transform:scaleX(0.8125);transform-origin:0 50%;">1001</div><div style="position:absolute;left:223.50px;top:502.40px;line-height:17px;white-space:nowrap;font-family:'Liberation Sans', sans-serif;font-size:13px;color:#111;-webkit-text-stroke:0.25px #000;transform:scaleX(0.8894);transform-origin:0 50%;">周波数応答解析の</div><div style="position:absolute;left:223.50px;top:513.40px;line-height:17px;white-space:nowrap;font-family:'Liberation Sans', sans-serif;font-size:13px;color:#111;-webkit-text-stroke:0.25px #000;transform:scaleX(0.7154);transform-origin:0 50%;">サブケース</div><div style="position:absolute;left:335.5px;top:509.5px;width:82.5px;height:18.5px;background:#fff;border:1px solid #cfcfcf;border-bottom-color:#b5b5b5;border-radius:3px;box-sizing:border-box"></div><svg style="position:absolute;left:405px;top:515.75px" width="9" height="6"><path d="M0.7 0.7 L4.5 4.5 L8.3 0.7" fill="none" stroke="#444" stroke-width="1"/></svg><div style="position:absolute;left:340.00px;top:509.40px;line-height:17px;white-space:nowrap;font-family:'Liberation Sans', sans-serif;font-size:13px;color:#000;-webkit-text-stroke:0.25px #000;transform:scaleX(0.4838);transform-origin:0 50%;">1</div><div style="position:absolute;left:423.80px;top:508.90px;line-height:17px;white-space:nowrap;font-family:'Liberation Sans', sans-serif;font-size:13px;color:#111;-webkit-text-stroke:0.25px #000;transform:scaleX(0.8821);transform-origin:0 50%;">自由度</div><div style="position:absolute;left:466px;top:509.5px;width:83.5px;height:18.5px;background:#fff;border:1px solid #cfcfcf;border-bottom-color:#b5b5b5;border-radius:3px;box-sizing:border-box"></div><svg style="position:absolute;left:536.5px;top:515.75px" width="9" height="6"><path d="M0.7 0.7 L4.5 4.5 L8.3 0.7" fill="none" stroke="#444" stroke-width="1"/></svg><div style="position:absolute;left:470.00px;top:509.40px;line-height:17px;white-space:nowrap;font-family:'Liberation Sans', sans-serif;font-size:13px;color:#000;-webkit-text-stroke:0.25px #000;transform:scaleX(1.0378);transform-origin:0 50%;">X</div><div style="position:absolute;left:566.60px;top:508.90px;line-height:17px;white-space:nowrap;font-family:'Liberation Sans', sans-serif;font-size:13px;color:#111;-webkit-text-stroke:0.25px #000;transform:scaleX(0.8923);transform-origin:0 50%;">節点</div><div style="position:absolute;left:595.5px;top:509px;width:68px;height:20px;background:#fff;border:1px solid #dadada;border-bottom:1px solid #6a6a6a;border-radius:3px 3px 0 0;box-sizing:border-box"></div><div style="position:absolute;left:600.20px;top:508.40px;line-height:17px;white-space:nowrap;font-family:'Liberation Sans', sans-serif;font-size:13px;color:#000;-webkit-text-stroke:0.25px #000;transform:scaleX(0.7710);transform-origin:0 50%;">1580</div><div style="position:absolute;left:668.5px;top:509.5px;width:53.0px;height:18.0px;background:#fdfdfd;border:1px solid #d0d0d0;border-bottom-color:#b0b0b0;border-radius:4px;box-sizing:border-box"></div><div style="position:absolute;left:671.00px;top:509.40px;line-height:17px;white-space:nowrap;font-family:'Liberation Sans', sans-serif;font-size:13px;color:#000;-webkit-text-stroke:0.25px #000;transform:scaleX(0.9231);transform-origin:0 50%;">選択終了</div><div style="position:absolute;left:742.5px;top:509.5px;width:50.5px;height:18.0px;background:#fdfdfd;border:1px solid #d0d0d0;border-bottom-color:#b0b0b0;border-radius:4px;box-sizing:border-box"></div><div style="position:absolute;left:758.00px;top:509.40px;line-height:17px;white-space:nowrap;font-family:'Liberation Sans', sans-serif;font-size:13px;color:#000;-webkit-text-stroke:0.25px #000;transform:scaleX(0.8077);transform-origin:0 50%;">更新</div><div style="position:absolute;left:808.5px;top:509.5px;width:115.5px;height:18.0px;background:#fdfdfd;border:1px solid #d0d0d0;border-bottom-color:#b0b0b0;border-radius:4px;box-sizing:border-box"></div><div style="position:absolute;left:822.00px;top:509.40px;line-height:17px;white-space:nowrap;font-family:'Liberation Sans', sans-serif;font-size:13px;color:#000;-webkit-text-stroke:0.25px #000;transform:scaleX(0.7614);transform-origin:0 50%;">CSVファイル出力...</div><div style="position:absolute;left:17px;top:547.5px;width:925px;height:99.0px;border:1px solid #dcdcdc;box-sizing:border-box"></div><div style="position:absolute;left:22px;top:540px;width:66px;height:14px;background:#f0f0f0"></div><div style="position:absolute;left:24.70px;top:537.60px;line-height:17px;white-space:nowrap;font-family:'Liberation Sans', sans-serif;font-size:13px;color:#111;-webkit-text-stroke:0.25px #000;transform:scaleX(0.6648);transform-origin:0 50%;">アニメーション</div><div style="position:absolute;left:21.30px;top:562.60px;line-height:17px;white-space:nowrap;font-family:'Liberation Sans', sans-serif;font-size:13px;color:#111;-webkit-text-stroke:0.25px #000;transform:scaleX(0.7246);transform-origin:0 50%;">0.0</div><div style="position:absolute;left:84px;top:570px;width:838px;height:4px;background:#e6e6e6;border:1px solid #d6d6d6;box-sizing:border-box"></div><svg style="position:absolute;left:72px;top:561px" width="12" height="20"><path d="M0.5 5.5 L6 0.5 L11.5 5.5 V19.5 H0.5Z" fill="#0078d7"/></svg><div style="position:absolute;left:209.5px;top:599px;width:169.5px;height:37px;border:1px solid #dcdcdc;box-sizing:border-box"></div><div style="position:absolute;left:215px;top:592px;width:58px;height:14px;background:#f0f0f0"></div><div style="position:absolute;left:217.50px;top:589.90px;line-height:17px;white-space:nowrap;font-family:'Liberation Sans', sans-serif;font-size:13px;color:#111;-webkit-text-stroke:0.25px #000;transform:scaleX(0.6795);transform-origin:0 50%;">コントロール</div><div style="position:absolute;left:234.5px;top:609.5px;width:55.0px;height:18.0px;background:#f7f7f7;border:1px solid #e6e6e6;border-bottom-color:#e0e0e0;border-radius:4px;box-sizing:border-box"></div><div style="position:absolute;left:249.00px;top:609.40px;line-height:17px;white-space:nowrap;font-family:'Liberation Sans', sans-serif;font-size:13px;color:#9a9a9a;transform:scaleX(0.9615);transform-origin:0 50%;">再生</div><div style="position:absolute;left:301.5px;top:609.5px;width:54.5px;height:18.0px;background:#f7f7f7;border:1px solid #e6e6e6;border-bottom-color:#e0e0e0;border-radius:4px;box-sizing:border-box"></div><div style="position:absolute;left:316.00px;top:609.40px;line-height:17px;white-space:nowrap;font-family:'Liberation Sans', sans-serif;font-size:13px;color:#9a9a9a;transform:scaleX(0.9615);transform-origin:0 50%;">停止</div><div style="position:absolute;left:406.5px;top:599px;width:391.5px;height:37px;border:1px solid #dcdcdc;box-sizing:border-box"></div><div style="position:absolute;left:412px;top:592px;width:29px;height:14px;background:#f0f0f0"></div><div style="position:absolute;left:414.40px;top:589.90px;line-height:17px;white-space:nowrap;font-family:'Liberation Sans', sans-serif;font-size:13px;color:#111;-webkit-text-stroke:0.25px #000;transform:scaleX(0.9231);transform-origin:0 50%;">設定</div><div style="position:absolute;left:433.60px;top:607.50px;line-height:17px;white-space:nowrap;font-family:'Liberation Sans', sans-serif;font-size:13px;color:#111;-webkit-text-stroke:0.25px #000;transform:scaleX(0.7872);transform-origin:0 50%;">変形スケール</div><div style="position:absolute;left:500px;top:608.5px;width:68px;height:18.5px;background:#ececec;border:1px solid #e2e2e2;box-sizing:border-box"></div><div style="position:absolute;left:504.00px;top:607.40px;line-height:17px;white-space:nowrap;font-family:'Liberation Sans', sans-serif;font-size:13px;color:#9a9a9a;transform:scaleX(0.6321);transform-origin:0 50%;">10.0</div><div style="position:absolute;left:587.30px;top:607.50px;line-height:17px;white-space:nowrap;font-family:'Liberation Sans', sans-serif;font-size:13px;color:#111;-webkit-text-stroke:0.25px #000;transform:scaleX(0.7231);transform-origin:0 50%;">スパン</div><div style="position:absolute;left:623.5px;top:608.5px;width:67.5px;height:18.5px;background:#ececec;border:1px solid #e2e2e2;box-sizing:border-box"></div><div style="position:absolute;left:627.00px;top:607.40px;line-height:17px;white-space:nowrap;font-family:'Liberation Sans', sans-serif;font-size:13px;color:#9a9a9a;transform:scaleX(0.5808);transform-origin:0 50%;">2.0</div><div style="position:absolute;left:729.5px;top:608.5px;width:57.0px;height:18.0px;background:#f7f7f7;border:1px solid #e6e6e6;border-bottom-color:#e0e0e0;border-radius:4px;box-sizing:border-box"></div><div style="position:absolute;left:745.00px;top:608.40px;line-height:17px;white-space:nowrap;font-family:'Liberation Sans', sans-serif;font-size:13px;color:#9a9a9a;transform:scaleX(0.9231);transform-origin:0 50%;">更新</div><div style="position:absolute;left:826px;top:608.5px;width:96.5px;height:18.0px;background:#f7f7f7;border:1px solid #e6e6e6;border-bottom-color:#e0e0e0;border-radius:4px;box-sizing:border-box"></div><div style="position:absolute;left:842.00px;top:608.40px;line-height:17px;white-space:nowrap;font-family:'Liberation Sans', sans-serif;font-size:13px;color:#9a9a9a;transform:scaleX(0.8702);transform-origin:0 50%;">動画の出力...</div><div style="position:absolute;left:35.00px;top:649.40px;line-height:17px;white-space:nowrap;font-family:'Liberation Sans', sans-serif;font-size:13px;color:#111;-webkit-text-stroke:0.25px #000;transform:scaleX(0.7754);transform-origin:0 50%;">※節点選択中はアニメーション機能を利用できません。</div><div style="position:absolute;left:848.5px;top:653.5px;width:85.0px;height:18.0px;background:#fdfdfd;border:1px solid #d0d0d0;border-bottom-color:#b0b0b0;border-radius:4px;box-sizing:border-box"></div><div style="position:absolute;left:878.00px;top:653.40px;line-height:17px;white-space:nowrap;font-family:'Liberation Sans', sans-serif;font-size:13px;color:#000;-webkit-text-stroke:0.25px #000;transform:scaleX(0.6923);transform-origin:0 50%;">閉じる</div></body></html>
